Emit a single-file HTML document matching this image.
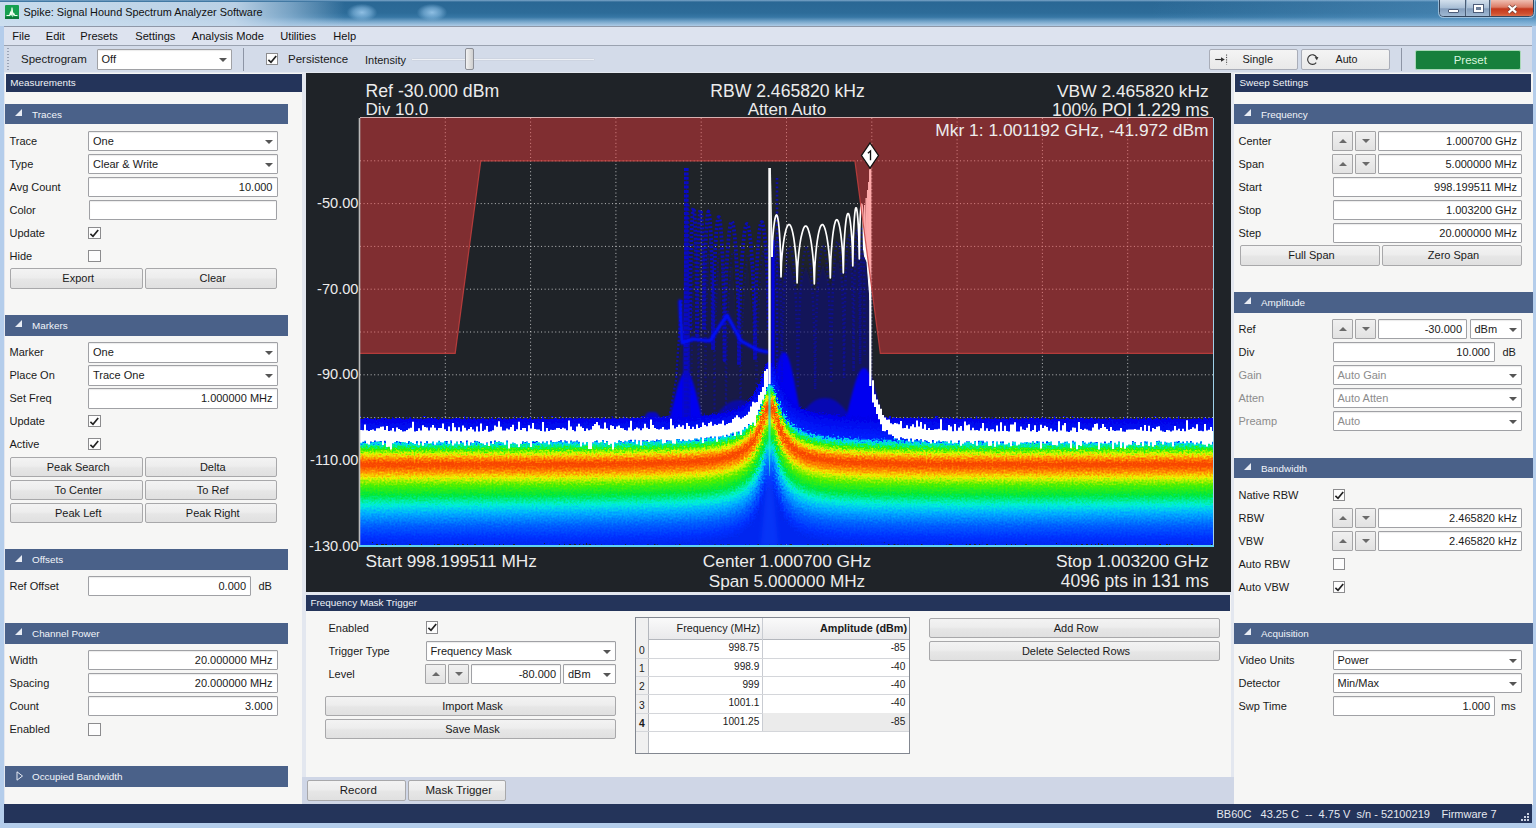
<!DOCTYPE html>
<html>
<head>
<meta charset="utf-8">
<style>
*{box-sizing:border-box;margin:0;padding:0}
html,body{width:1536px;height:828px;overflow:hidden;background:#b4cdeb;font-family:"Liberation Sans",sans-serif;font-size:11px;color:#1a1a1a}
.abs{position:absolute}
#titlebar{position:absolute;left:0;top:0;width:1536px;height:26px;background:linear-gradient(180deg,#7fa8cb 0,#2a6794 8%,#2d6c99 50%,#3777a5 66%,#7aa9cd 84%,#aecbe5 100%)}
#titleglow{position:absolute;left:0;top:2px;width:345px;height:24px;background:linear-gradient(90deg,rgba(206,224,240,.96) 0%,rgba(196,216,235,.93) 68%,rgba(170,200,226,.6) 84%,rgba(150,190,220,0) 100%)}
.tblob{position:absolute;top:4px;width:30px;height:17px;background:radial-gradient(ellipse at center,rgba(160,205,240,.85) 0%,rgba(150,200,238,.5) 40%,rgba(140,190,230,0) 72%)}
#title{position:absolute;left:23.5px;top:6px;font-size:10.9px;color:#111;white-space:nowrap}
#menubar{position:absolute;left:4.3px;top:26px;width:1528.2px;height:20px;background:#dde3ef;border-top:1px solid #8f98a8;border-bottom:1px solid #9aa2b0}
#menubar span{position:absolute;top:3px;font-size:11.1px;color:#111;white-space:nowrap}
#toolbar{position:absolute;left:4.3px;top:46px;width:1528.2px;height:27px;background:#d3dbe9}
.lbl{position:absolute;white-space:nowrap;font-size:11px;color:#1a1a1a;line-height:13px}
.dis{color:#8c8c8c}
.hdr1{position:absolute;background:#24345a;color:#f0f3f8;font-size:9.9px;line-height:18px;padding-left:4.5px;height:18px;white-space:nowrap}
.hdr2{position:absolute;background:#4a6189;color:#f2f5fa;font-size:9.9px;line-height:22.5px;overflow:hidden;height:20.5px;white-space:nowrap;padding-left:27px}
.hdr2 i{position:absolute;left:10px;top:5.3px;width:0;height:0;border-left:7px solid transparent;border-bottom:7px solid #e8ecf4}
.hdr2 i.c{left:11px;top:5px;border:0;width:7px;height:9px}
.inp{position:absolute;height:20px;background:#fff;border:1px solid #a0a1a5;border-radius:1px;font-size:11px;line-height:18.5px;white-space:nowrap;padding:0 4px;text-align:right;color:#1a1a1a;box-shadow:inset 0 1px 1px rgba(0,0,0,.08)}
.inp.dis{color:#8c8c8c}
.cmb{text-align:left}
.cmb:after{content:"";position:absolute;right:4px;top:8px;border-left:4px solid transparent;border-right:4px solid transparent;border-top:4px solid #555}
.btn{position:absolute;height:20px;border:1px solid #a8a8aa;border-radius:2px;background:linear-gradient(180deg,#f3f3f3 0%,#ededed 45%,#e6e6e6 55%,#e0e0e0 100%);font-size:11px;line-height:18.5px;text-align:center;color:#1a1a1a;white-space:nowrap;padding-left:4px}
.chk{position:absolute;width:12.5px;height:12.5px;background:#fdfdfd;border:1px solid #8c8c8e}
.chk svg{position:absolute;left:0;top:0}
.spn{position:absolute;width:21px;height:20.5px;border:1px solid #a4a4a6;border-radius:1px;background:linear-gradient(180deg,#f0f0f0,#e2e2e2)}
.spn:after{content:"";position:absolute;left:5.5px;top:7px;border-left:4px solid transparent;border-right:4px solid transparent}
.spn.u:after{border-bottom:4px solid #6a6a6a}
.spn.d:after{border-top:4px solid #6a6a6a}
#bgfill{position:absolute;left:4px;top:72px;width:1529px;height:733px;background:#e3e7ef}
#left{position:absolute;left:4.5px;top:73px;width:297.5px;height:731.5px;background:#f6f6f5}
#right{position:absolute;left:1234px;top:73px;width:298.5px;height:731.5px;background:#f6f6f5}
#chart{position:absolute;left:306px;top:73px;width:925px;height:518.5px;background:#1f2328}
#fmt{position:absolute;left:306px;top:594.5px;width:924.5px;height:182px;background:#f6f6f5}
#tabs{position:absolute;left:302px;top:776.5px;width:932px;height:28px;background:#cfd6e6}
#status{position:absolute;left:4.3px;top:804.3px;width:1528.2px;height:18.5px;background:#24345a}
.ct{position:absolute;color:#ececec;font-size:17.3px;line-height:20px;white-space:nowrap}
</style>
</head>

<body>
<div id="titlebar"><div id="titleglow"></div><div class="tblob" style="left:347px"></div><div class="tblob" style="left:417px"></div>
<svg class="abs" style="left:5px;top:5px" width="14" height="14" viewBox="0 0 14 14"><rect width="14" height="14" rx="1" fill="#16a050"/><rect y="11.5" width="14" height="2.5" fill="#0c7a3a"/><path d="M1.5 10.5 L4.5 10.5 L5.5 7.5 L6.3 10.5 L7 2.5 L7.9 10.5 L8.8 8.5 L9.7 10.5 L12.5 10.5" stroke="#f0fff0" stroke-width="1.1" fill="none"/></svg>
<div id="title">Spike: Signal Hound Spectrum Analyzer Software</div>
<div class="abs" style="left:1150px;top:0;width:386px;height:26px;background:linear-gradient(90deg,rgba(110,170,215,0),rgba(110,170,215,.42))"></div>
<div class="abs" style="left:1438.5px;top:-1px;width:95px;height:18px;border:1px solid #33465e;border-radius:0 0 4.5px 4.5px;overflow:hidden;background:#9db6cf;box-shadow:0 0 0 1px rgba(220,235,250,.55)"><div class="abs" style="left:0;top:0;width:26px;height:17px;background:linear-gradient(180deg,#d3e0ed,#a9bfd6 45%,#859fbd 52%,#a3bcd6);border-right:1px solid #4a5d75"></div><div class="abs" style="left:27px;top:0;width:23px;height:17px;background:linear-gradient(180deg,#d3e0ed,#a9bfd6 45%,#859fbd 52%,#a3bcd6);border-right:1px solid #4a5d75"></div><div class="abs" style="left:51px;top:0;width:43px;height:17px;background:linear-gradient(180deg,#efbfb2,#dc7c66 42%,#c4381c 52%,#cf5030 80%,#de7a55)"></div><div class="abs" style="left:8.5px;top:8.5px;width:10.5px;height:4.5px;background:#fff;border:1px solid #4c5c78;border-radius:1px"></div><div class="abs" style="left:34.5px;top:4.5px;width:9px;height:7.6px;border:2px solid #fff;background:#6d7f99;outline:1px solid #4c5c78"></div><svg class="abs" style="left:66.5px;top:3.6px" width="13" height="11" viewBox="0 0 13 11"><path d="M2.6 1.8 L10.2 8.6 M10.2 1.8 L2.6 8.6" stroke="#7a4338" stroke-width="3.6"/><path d="M2.6 1.8 L10.2 8.6 M10.2 1.8 L2.6 8.6" stroke="#fff" stroke-width="2.1"/></svg></div>
</div>
<div id="menubar">
<span style="left:8px">File</span>
<span style="left:41.5px">Edit</span>
<span style="left:76px">Presets</span>
<span style="left:131px">Settings</span>
<span style="left:187.5px">Analysis Mode</span>
<span style="left:276px">Utilities</span>
<span style="left:329px">Help</span>
</div>
<div id="toolbar"></div>
<div class="abs" style="left:7px;top:48px;width:2px;height:22px;background:repeating-linear-gradient(180deg,#9aa3b5 0 1px,transparent 1px 3px)"></div>
<div class="lbl " style="left:21px;top:53px;font-size:11.5px">Spectrogram</div>
<div class="inp cmb " style="left:96.5px;top:49px;width:135px;height:20.5px">Off</div>
<div class="abs" style="left:243px;top:48px;width:1px;height:23px;background:#8d95a5"></div>
<div class="chk" style="left:265.5px;top:52.5px"><svg width="11" height="11" viewBox="0 0 11 11"><path d="M1.4 5.9 L4 8.3 L9.2 2" stroke="#222" stroke-width="1.7" fill="none"/></svg></div>
<div class="lbl " style="left:288px;top:52.5px;font-size:11.5px">Persistence</div>
<div class="lbl " style="left:365px;top:53.5px;">Intensity</div>
<div class="abs" style="left:411px;top:57.5px;width:184px;height:3px;background:#eef1f6;border:1px solid #cdd4e1;border-radius:2px"></div>
<div class="abs" style="left:465px;top:48px;width:9px;height:22px;background:linear-gradient(90deg,#f2f2f2,#cfcfcf);border:1px solid #8b8e96;border-radius:2px"></div>
<div class="btn" style="left:1209px;top:48.6px;width:88.5px;height:21.3px;background:linear-gradient(180deg,#f4f4f4,#e9e9e9);border-color:#a9adb8;line-height:19.5px;"><span style="position:relative;left:2.5px">Single</span></div>
<svg class="abs" style="left:1214px;top:53px" width="16" height="13" viewBox="0 0 16 13"><path d="M1.2 6.5 H8" stroke="#333" stroke-width="1.1"/><path d="M7 4.2 L10.8 6.5 L7 8.8 Z" fill="#333"/><path d="M12.6 1.5 V11.5" stroke="#444" stroke-width="1" stroke-dasharray="1.2 1.2"/></svg>
<div class="btn" style="left:1300.5px;top:48.6px;width:89px;height:21.3px;background:linear-gradient(180deg,#f4f4f4,#e9e9e9);border-color:#a9adb8;line-height:19.5px;"><span style="position:relative;left:-.5px;font-size:10.7px">Auto</span></div>
<svg class="abs" style="left:1305px;top:52px" width="16" height="16" viewBox="0 0 16 16"><path d="M11.6 5.2 A4.8 4.8 0 1 0 11.2 10.6" stroke="#333" stroke-width="1.1" fill="none"/><path d="M9.6 5.2 L13.4 5 L11.9 8.3 Z" fill="#333"/></svg>
<div class="abs" style="left:1401px;top:48px;width:1px;height:23px;background:#8d95a5"></div>
<div class="abs" style="left:1414.5px;top:49.5px;width:106.5px;height:20px;background:#17803c;border:1px solid #a9d8b8;border-radius:2px;color:#d8f5dd;font-size:11.5px;line-height:18px;text-align:center;padding-left:5px">Preset</div>
<div id="bgfill"></div>
<div id="left"></div>
<div class="hdr1" style="left:5.8px;top:74px;width:296px">Measurements</div>
<div class="hdr2" style="left:5px;top:103.7px;width:283px"><i></i>Traces</div>
<div class="lbl " style="left:9.5px;top:134.9px;">Trace</div>
<div class="inp cmb " style="left:88px;top:130.6px;width:189.5px;height:20.5px">One</div>
<div class="lbl " style="left:9.5px;top:157.9px;">Type</div>
<div class="inp cmb " style="left:88px;top:153.6px;width:189.5px;height:20.5px">Clear &amp; Write</div>
<div class="lbl " style="left:9.5px;top:180.9px;">Avg Count</div>
<div class="inp " style="left:88px;top:176.6px;width:189.5px;height:20.5px">10.000</div>
<div class="lbl " style="left:9.5px;top:203.9px;">Color</div>
<div class="inp " style="left:88.7px;top:200.1px;width:188.3px;height:19.5px"></div>
<div class="lbl " style="left:9.5px;top:226.9px;">Update</div>
<div class="chk" style="left:88px;top:226.7px"><svg width="11" height="11" viewBox="0 0 11 11"><path d="M1.4 5.9 L4 8.3 L9.2 2" stroke="#222" stroke-width="1.7" fill="none"/></svg></div>
<div class="lbl " style="left:9.5px;top:249.9px;">Hide</div>
<div class="chk" style="left:88px;top:249.7px"></div>
<div class="btn" style="left:10px;top:268.1px;width:132.5px;height:20.5px;">Export</div>
<div class="btn" style="left:144.5px;top:268.1px;width:132.5px;height:20.5px;">Clear</div>
<div class="hdr2" style="left:5px;top:315.2px;width:283px"><i></i>Markers</div>
<div class="lbl " style="left:9.5px;top:346.4px;">Marker</div>
<div class="inp cmb " style="left:88px;top:342.09999999999997px;width:189.5px;height:20.5px">One</div>
<div class="lbl " style="left:9.5px;top:369.4px;">Place On</div>
<div class="inp cmb " style="left:88px;top:365.09999999999997px;width:189.5px;height:20.5px">Trace One</div>
<div class="lbl " style="left:9.5px;top:392.4px;">Set Freq</div>
<div class="inp " style="left:88px;top:388.09999999999997px;width:189.5px;height:20.5px">1.000000 MHz</div>
<div class="lbl " style="left:9.5px;top:415.4px;">Update</div>
<div class="chk" style="left:88px;top:414.7px"><svg width="11" height="11" viewBox="0 0 11 11"><path d="M1.4 5.9 L4 8.3 L9.2 2" stroke="#222" stroke-width="1.7" fill="none"/></svg></div>
<div class="lbl " style="left:9.5px;top:438.4px;">Active</div>
<div class="chk" style="left:88px;top:437.7px"><svg width="11" height="11" viewBox="0 0 11 11"><path d="M1.4 5.9 L4 8.3 L9.2 2" stroke="#222" stroke-width="1.7" fill="none"/></svg></div>
<div class="btn" style="left:10px;top:456.59999999999997px;width:132.5px;height:20.5px;">Peak Search</div>
<div class="btn" style="left:144.5px;top:456.59999999999997px;width:132.5px;height:20.5px;">Delta</div>
<div class="btn" style="left:10px;top:479.59999999999997px;width:132.5px;height:20.5px;">To Center</div>
<div class="btn" style="left:144.5px;top:479.59999999999997px;width:132.5px;height:20.5px;">To Ref</div>
<div class="btn" style="left:10px;top:502.59999999999997px;width:132.5px;height:20.5px;">Peak Left</div>
<div class="btn" style="left:144.5px;top:502.59999999999997px;width:132.5px;height:20.5px;">Peak Right</div>
<div class="hdr2" style="left:5px;top:549.3px;width:283px"><i></i>Offsets</div>
<div class="lbl " style="left:9.5px;top:580.1999999999999px;">Ref Offset</div>
<div class="inp " style="left:88px;top:575.9px;width:163px;height:20.5px">0.000</div>
<div class="lbl " style="left:258.5px;top:579.9px;">dB</div>
<div class="hdr2" style="left:5px;top:623px;width:283px"><i></i>Channel Power</div>
<div class="lbl " style="left:9.5px;top:654.1999999999999px;">Width</div>
<div class="inp " style="left:88px;top:649.9px;width:189.5px;height:20.5px">20.000000 MHz</div>
<div class="lbl " style="left:9.5px;top:677.1999999999999px;">Spacing</div>
<div class="inp " style="left:88px;top:672.9px;width:189.5px;height:20.5px">20.000000 MHz</div>
<div class="lbl " style="left:9.5px;top:700.1999999999999px;">Count</div>
<div class="inp " style="left:88px;top:695.9px;width:189.5px;height:20.5px">3.000</div>
<div class="lbl " style="left:9.5px;top:723.1999999999999px;">Enabled</div>
<div class="chk" style="left:88px;top:723.0px"></div>
<div class="hdr2" style="left:5px;top:766px;width:283px"><svg class="abs" style="left:11px;top:5px" width="8" height="10" viewBox="0 0 8 10"><path d="M1 .8 L6.5 5 L1 9.2 Z" fill="none" stroke="#e8ecf4" stroke-width="1"/></svg>Occupied Bandwidth</div>
<div id="right"></div>
<div class="hdr1" style="left:1235px;top:74px;width:295.7px">Sweep Settings</div>
<div class="hdr2" style="left:1234px;top:103.7px;width:299px"><i></i>Frequency</div>
<div class="lbl " style="left:1238.5px;top:134.9px;">Center</div>
<div class="spn u" style="left:1332.3px;top:130.6px"></div><div class="spn d" style="left:1355.2px;top:130.6px"></div>
<div class="inp " style="left:1378px;top:130.6px;width:144px;height:20.5px">1.000700 GHz</div>
<div class="lbl " style="left:1238.5px;top:157.9px;">Span</div>
<div class="spn u" style="left:1332.3px;top:153.6px"></div><div class="spn d" style="left:1355.2px;top:153.6px"></div>
<div class="inp " style="left:1378px;top:153.6px;width:144px;height:20.5px">5.000000 MHz</div>
<div class="lbl " style="left:1238.5px;top:180.9px;">Start</div>
<div class="inp " style="left:1332.5px;top:176.6px;width:189.5px;height:20.5px">998.199511 MHz</div>
<div class="lbl " style="left:1238.5px;top:203.9px;">Stop</div>
<div class="inp " style="left:1332.5px;top:199.6px;width:189.5px;height:20.5px">1.003200 GHz</div>
<div class="lbl " style="left:1238.5px;top:226.9px;">Step</div>
<div class="inp " style="left:1332.5px;top:222.6px;width:189.5px;height:20.5px">20.000000 MHz</div>
<div class="btn" style="left:1239.5px;top:245.1px;width:140px;height:20.5px;">Full Span</div>
<div class="btn" style="left:1381.5px;top:245.1px;width:140px;height:20.5px;">Zero Span</div>
<div class="hdr2" style="left:1234px;top:292px;width:299px"><i></i>Amplitude</div>
<div class="lbl " style="left:1238.5px;top:323.2px;">Ref</div>
<div class="spn u" style="left:1332.3px;top:318.9px"></div><div class="spn d" style="left:1355.2px;top:318.9px"></div>
<div class="inp " style="left:1378px;top:318.9px;width:89px;height:20.5px">-30.000</div>
<div class="inp cmb " style="left:1469.5px;top:318.9px;width:52.5px;height:20.5px">dBm</div>
<div class="lbl " style="left:1238.5px;top:346.2px;">Div</div>
<div class="inp " style="left:1332.5px;top:341.9px;width:162.5px;height:20.5px">10.000</div>
<div class="lbl " style="left:1502.5px;top:345.9px;">dB</div>
<div class="lbl dis" style="left:1238.5px;top:369.2px;">Gain</div>
<div class="inp cmb dis" style="left:1332.5px;top:364.9px;width:189.5px;height:20.5px">Auto Gain</div>
<div class="lbl dis" style="left:1238.5px;top:392.2px;">Atten</div>
<div class="inp cmb dis" style="left:1332.5px;top:387.9px;width:189.5px;height:20.5px">Auto Atten</div>
<div class="lbl dis" style="left:1238.5px;top:415.2px;">Preamp</div>
<div class="inp cmb dis" style="left:1332.5px;top:410.9px;width:189.5px;height:20.5px">Auto</div>
<div class="hdr2" style="left:1234px;top:457.7px;width:299px"><i></i>Bandwidth</div>
<div class="lbl " style="left:1238.5px;top:488.9px;">Native RBW</div>
<div class="chk" style="left:1332.5px;top:488.7px"><svg width="11" height="11" viewBox="0 0 11 11"><path d="M1.4 5.9 L4 8.3 L9.2 2" stroke="#222" stroke-width="1.7" fill="none"/></svg></div>
<div class="lbl " style="left:1238.5px;top:511.9px;">RBW</div>
<div class="spn u" style="left:1332.3px;top:507.59999999999997px"></div><div class="spn d" style="left:1355.2px;top:507.59999999999997px"></div>
<div class="inp " style="left:1378px;top:507.59999999999997px;width:144px;height:20.5px">2.465820 kHz</div>
<div class="lbl " style="left:1238.5px;top:534.8999999999999px;">VBW</div>
<div class="spn u" style="left:1332.3px;top:530.5999999999999px"></div><div class="spn d" style="left:1355.2px;top:530.5999999999999px"></div>
<div class="inp " style="left:1378px;top:530.5999999999999px;width:144px;height:20.5px">2.465820 kHz</div>
<div class="lbl " style="left:1238.5px;top:557.8999999999999px;">Auto RBW</div>
<div class="chk" style="left:1332.5px;top:557.6999999999999px"></div>
<div class="lbl " style="left:1238.5px;top:580.8999999999999px;">Auto VBW</div>
<div class="chk" style="left:1332.5px;top:580.6999999999999px"><svg width="11" height="11" viewBox="0 0 11 11"><path d="M1.4 5.9 L4 8.3 L9.2 2" stroke="#222" stroke-width="1.7" fill="none"/></svg></div>
<div class="hdr2" style="left:1234px;top:623px;width:299px"><i></i>Acquisition</div>
<div class="lbl " style="left:1238.5px;top:654.1999999999999px;">Video Units</div>
<div class="inp cmb " style="left:1332.5px;top:649.9px;width:189.5px;height:20.5px">Power</div>
<div class="lbl " style="left:1238.5px;top:677.1999999999999px;">Detector</div>
<div class="inp cmb " style="left:1332.5px;top:672.9px;width:189.5px;height:20.5px">Min/Max</div>
<div class="lbl " style="left:1238.5px;top:700.1999999999999px;">Swp Time</div>
<div class="inp " style="left:1332.5px;top:695.9px;width:162.5px;height:20.5px">1.000</div>
<div class="lbl " style="left:1501px;top:699.9px;">ms</div>
<div id="chart">
<svg class="abs" style="left:0;top:0" width="925" height="518" viewBox="306 73 925 518"><defs><linearGradient id="gA" x1="0" y1="0" x2="0" y2="1"><stop offset="0" stop-color="#0000e8"/><stop offset=".46" stop-color="#0020ff"/><stop offset=".53" stop-color="#00d8ff"/><stop offset=".6" stop-color="#00f080"/><stop offset=".67" stop-color="#30f000"/><stop offset=".77" stop-color="#e8f800"/><stop offset=".87" stop-color="#ff8c00"/><stop offset=".95" stop-color="#fb5204"/><stop offset="1" stop-color="#f64004"/></linearGradient><linearGradient id="gB" x1="0" y1="0" x2="0" y2="1"><stop offset="0" stop-color="#f64004"/><stop offset=".04" stop-color="#fb5204"/><stop offset=".10" stop-color="#ff8c00"/><stop offset=".17" stop-color="#f0f000"/><stop offset=".26" stop-color="#50f000"/><stop offset=".38" stop-color="#00e838"/><stop offset=".50" stop-color="#00f0d8"/><stop offset=".60" stop-color="#00b0ff"/><stop offset=".75" stop-color="#0060ff"/><stop offset=".9" stop-color="#0030ff"/><stop offset="1" stop-color="#0028f0"/></linearGradient><filter id="spk" x="0" y="0" width="1" height="1"><feTurbulence type="fractalNoise" baseFrequency="0.5" numOctaves="2" seed="3" result="n"/><feDisplacementMap in="SourceGraphic" in2="n" scale="11" xChannelSelector="R" yChannelSelector="G"/></filter><filter id="bl0"><feGaussianBlur stdDeviation="0.6"/></filter><filter id="bl1"><feGaussianBlur stdDeviation="1.2"/></filter><filter id="bl2"><feGaussianBlur stdDeviation="2.5"/></filter><filter id="bl3" x="-1" width="3"><feGaussianBlur stdDeviation="4"/></filter><clipPath id="cp"><rect x="360" y="118" width="853" height="428"/></clipPath></defs><path d="M445.3 118V546M360 160.8H1213M530.6 118V546M360 203.6H1213M615.9 118V546M360 246.4H1213M701.2 118V546M360 289.2H1213M786.5 118V546M360 332H1213M871.8 118V546M360 374.8H1213M957.1 118V546M360 417.6H1213M1042.4 118V546M360 460.4H1213M1127.7 118V546M360 503.2H1213" stroke="#e8e8e8" stroke-width="1" stroke-dasharray="1 2.55" fill="none" opacity=".78"/><g clip-path="url(#cp)"><path d="M360 418.7 L361.5 419.8 L363 420.1 L364.5 419.8 L366 419.5 L367.5 420.2 L369 420.2 L370.5 418.6 L372 419.2 L373.5 419.6 L375 419.6 L376.5 420 L378 419.7 L379.5 419.9 L381 419.9 L382.5 418.8 L384 419.7 L385.5 420 L387 419.9 L388.5 418.8 L390 418.7 L391.5 420 L393 419.8 L394.5 418.3 L396 420.1 L397.5 418.8 L399 419.8 L400.5 418.1 L402 419.2 L403.5 419.8 L405 419.5 L406.5 419.2 L408 418.6 L409.5 419.6 L411 418.3 L412.5 419.5 L414 419 L415.5 418.8 L417 418.5 L418.5 419.8 L420 419.4 L421.5 419.9 L423 419.6 L424.5 419.4 L426 418.6 L427.5 418.5 L429 419.8 L430.5 418.1 L432 419.9 L433.5 419.6 L435 418.4 L436.5 419.9 L438 420 L439.5 419.9 L441 420 L442.5 419.8 L444 418.8 L445.5 419.6 L447 420 L448.5 419 L450 419.7 L451.5 418.4 L453 420 L454.5 418.5 L456 419.7 L457.5 419.3 L459 419 L460.5 419.1 L462 419.8 L463.5 419 L465 418.7 L466.5 419.8 L468 419.9 L469.5 418.7 L471 418.7 L472.5 419.8 L474 419.7 L475.5 419.4 L477 419.8 L478.5 418.4 L480 419.4 L481.5 419.2 L483 419.6 L484.5 419.2 L486 419.8 L487.5 419.5 L489 419.7 L490.5 418.8 L492 418.6 L493.5 419.4 L495 419.5 L496.5 419.4 L498 420 L499.5 419.9 L501 419.4 L502.5 419.9 L504 417.9 L505.5 419.2 L507 419.6 L508.5 419.5 L510 419.2 L511.5 419.6 L513 419.6 L514.5 418.6 L516 419.5 L517.5 419.4 L519 418.6 L520.5 419.8 L522 418.4 L523.5 419.5 L525 419.6 L526.5 419.6 L528 418.9 L529.5 419.4 L531 418.8 L532.5 419.7 L534 419.8 L535.5 419.5 L537 419.3 L538.5 418.3 L540 419.5 L541.5 419.1 L543 419.3 L544.5 419.7 L546 419.8 L547.5 419.1 L549 419.4 L550.5 419.5 L552 418.9 L553.5 419.5 L555 419.2 L556.5 419.5 L558 419.3 L559.5 419.6 L561 418.8 L562.5 418.1 L564 419.7 L565.5 418.5 L567 418 L568.5 419.4 L570 419.1 L571.5 419.3 L573 419.2 L574.5 418.7 L576 418.6 L577.5 419.2 L579 419.4 L580.5 418.9 L582 419.4 L583.5 418.3 L585 419.6 L586.5 418 L588 419.4 L589.5 419 L591 418.6 L592.5 418 L594 418.2 L595.5 418.9 L597 418.5 L598.5 418.6 L600 418.7 L601.5 419.1 L603 417.8 L604.5 418.1 L606 419 L607.5 418.4 L609 418.8 L610.5 418.9 L612 418.4 L613.5 418.7 L615 418.6 L616.5 419.2 L618 419.3 L619.5 418.5 L621 418.5 L622.5 419.2 L624 418.4 L625.5 418.8 L627 418 L628.5 418.6 L630 418.8 L631.5 418.8 L633 418.9 L634.5 418 L636 419 L637.5 417.4 L639 417.8 L640.5 418.4 L642 418.8 L643.5 418 L645 418.7 L646.5 418.3 L648 417.9 L649.5 418.2 L651 417 L652.5 417 L654 417.1 L655.5 418.2 L657 417.9 L658.5 418.6 L660 417.2 L661.5 417.7 L663 417.3 L664.5 417.3 L666 418.2 L667.5 417.8 L669 418.2 L670.5 417.6 L672 417.9 L673.5 418.1 L675 417.2 L676.5 417.9 L678 417.6 L679.5 417.8 L681 417.6 L682.5 417.4 L684 417.3 L685.5 417.8 L687 417.6 L688.5 417.1 L690 417.4 L691.5 415.9 L693 417.2 L694.5 417.1 L696 416.3 L697.5 417.1 L699 416.4 L700.5 416.3 L702 416.8 L703.5 416 L705 416.5 L706.5 416 L708 415.4 L709.5 416 L711 415.6 L712.5 414.8 L714 414.6 L715.5 415.1 L717 414.8 L718.5 414.8 L720 414.7 L721.5 412.8 L723 413.1 L724.5 413.9 L726 413 L727.5 412.3 L729 411.8 L730.5 412 L732 412 L733.5 410.4 L735 411 L736.5 410.4 L738 409.8 L739.5 408.9 L741 408.5 L742.5 406.9 L744 406.4 L745.5 404.9 L747 404.6 L748.5 402.8 L750 400.8 L751.5 399.6 L753 396.8 L754.5 396 L756 392.6 L757.5 391.1 L759 387.6 L760.5 384.3 L762 380.2 L763.5 375.8 L765 371.8 L766.5 367.8 L768 368.7 L769.5 368.4 L771 368.6 L772.5 368.3 L774 371.3 L775.5 376 L777 378.6 L778.5 383.8 L780 387.6 L781.5 389.3 L783 392.3 L784.5 396.1 L786 397.7 L787.5 400.2 L789 401.5 L790.5 402.4 L792 403.4 L793.5 405 L795 406.4 L796.5 407.7 L798 407.4 L799.5 408.5 L801 409.6 L802.5 409.7 L804 409.5 L805.5 411.7 L807 410.6 L808.5 412 L810 412.7 L811.5 413.2 L813 412.2 L814.5 413.7 L816 413.4 L817.5 414.4 L819 414.7 L820.5 413.8 L822 414.1 L823.5 414.1 L825 415 L826.5 414.7 L828 414.8 L829.5 415.9 L831 415.5 L832.5 415.9 L834 414 L835.5 416.1 L837 416.1 L838.5 416.7 L840 416.5 L841.5 416.9 L843 416.4 L844.5 416.3 L846 416.9 L847.5 417.5 L849 416.1 L850.5 416.6 L852 417 L853.5 417.6 L855 417.6 L856.5 417.7 L858 417.4 L859.5 416.9 L861 417.8 L862.5 416.9 L864 417.9 L865.5 417 L867 418.2 L868.5 418.3 L870 416.8 L871.5 417.5 L873 417.2 L874.5 418 L876 417.6 L877.5 418.1 L879 418.3 L880.5 418 L882 417.2 L883.5 418.1 L885 416.4 L886.5 417 L888 418.7 L889.5 416.8 L891 418.8 L892.5 418.9 L894 416.9 L895.5 418.9 L897 418.8 L898.5 418.3 L900 418.5 L901.5 418.2 L903 418.7 L904.5 418.9 L906 418.6 L907.5 418.5 L909 419.1 L910.5 418.8 L912 418.7 L913.5 417.3 L915 418.8 L916.5 417.9 L918 419.2 L919.5 417.7 L921 419.3 L922.5 418.3 L924 418.1 L925.5 418.3 L927 419.4 L928.5 418.9 L930 418.6 L931.5 419.4 L933 419.2 L934.5 418.6 L936 416.7 L937.5 418.1 L939 419.5 L940.5 419.4 L942 419.2 L943.5 419.4 L945 419.4 L946.5 418.9 L948 418.8 L949.5 419.3 L951 418.2 L952.5 418.7 L954 419.6 L955.5 419.2 L957 418.3 L958.5 418.7 L960 419.6 L961.5 419 L963 418.4 L964.5 419.3 L966 419.6 L967.5 418.2 L969 418.5 L970.5 419.1 L972 419.1 L973.5 419.4 L975 418.8 L976.5 418.6 L978 419 L979.5 418.4 L981 419.7 L982.5 419 L984 419.5 L985.5 419.2 L987 419.4 L988.5 417.3 L990 419.2 L991.5 418.6 L993 419.6 L994.5 419.2 L996 418.8 L997.5 419.5 L999 418.5 L1000.5 419.8 L1002 419.2 L1003.5 419.5 L1005 419.2 L1006.5 419.1 L1008 419.8 L1009.5 419.4 L1011 419.5 L1012.5 419.2 L1014 419.4 L1015.5 419.6 L1017 419.6 L1018.5 419.6 L1020 419.5 L1021.5 419.2 L1023 418 L1024.5 419.2 L1026 419.5 L1027.5 419.6 L1029 419.2 L1030.5 419.6 L1032 419 L1033.5 417.4 L1035 419.4 L1036.5 419.1 L1038 419.9 L1039.5 419.3 L1041 419.4 L1042.5 419.4 L1044 418.3 L1045.5 417.4 L1047 419.7 L1048.5 419.7 L1050 420 L1051.5 419.7 L1053 418.8 L1054.5 419.2 L1056 419.4 L1057.5 419 L1059 419.9 L1060.5 419.3 L1062 419.9 L1063.5 419.8 L1065 419.5 L1066.5 419.9 L1068 419.5 L1069.5 419.9 L1071 419 L1072.5 419.3 L1074 419 L1075.5 419 L1077 419.7 L1078.5 419.2 L1080 419.1 L1081.5 419.2 L1083 419.9 L1084.5 419.2 L1086 419.7 L1087.5 419.5 L1089 419.6 L1090.5 419.9 L1092 419.8 L1093.5 419.9 L1095 419.5 L1096.5 419.4 L1098 419.2 L1099.5 419.6 L1101 418.8 L1102.5 419.4 L1104 419.1 L1105.5 419.9 L1107 418.9 L1108.5 419.9 L1110 418.7 L1111.5 418.4 L1113 419.7 L1114.5 419.8 L1116 419.3 L1117.5 419.7 L1119 418.9 L1120.5 419.8 L1122 418.9 L1123.5 420 L1125 419.3 L1126.5 418.5 L1128 419 L1129.5 418.5 L1131 418.7 L1132.5 419.9 L1134 419.2 L1135.5 419 L1137 419.2 L1138.5 419.8 L1140 419 L1141.5 418.6 L1143 419.5 L1144.5 419.4 L1146 419.9 L1147.5 418.8 L1149 419 L1150.5 419.7 L1152 419.9 L1153.5 420 L1155 419.7 L1156.5 419.9 L1158 419.3 L1159.5 419 L1161 420 L1162.5 419.1 L1164 418.9 L1165.5 420.1 L1167 419.2 L1168.5 419.9 L1170 419.7 L1171.5 420.1 L1173 419.3 L1174.5 418.9 L1176 418.5 L1177.5 419.9 L1179 420 L1180.5 420 L1182 419.8 L1183.5 420 L1185 419.5 L1186.5 419.4 L1188 420.1 L1189.5 419.4 L1191 419.2 L1192.5 419.6 L1194 419.7 L1195.5 418.4 L1197 419.2 L1198.5 419.9 L1200 419.2 L1201.5 419.6 L1203 420 L1204.5 418.9 L1206 417.9 L1207.5 419.8 L1209 419.4 L1210.5 419.6 L1212 419.4 L1213 470 L360 470 Z" fill="#0000f0"/><path d="M772 236 L776 250 L781 284 L789 262 L797 292 L806 266 L814 292 L823 264 L830 287 L837.5 258 L843 282 L849 252 L853 275 L856 246 L859.5 268 L861.5 240 L864 258 L869 240 L871 300 L872 428 L772 428 Z" fill="#0a0a78" opacity=".62" filter="url(#bl1)"/><path d="M690 250 L697 330 L708 240 L713 340 L718 246 L724.5 350 L731.5 250 L739 355 L747 252 L755 350 L763 250 L768 300 L768 428 L672 428 L682 330 Z" fill="#0a0a78" opacity=".38" filter="url(#bl1)"/><path d="M663 440 C673.4 410 678 372 686 372 C694 372 698.6 410 709 440 Z" fill="#0000f0" opacity="1.0" filter="url(#bl1)"/><path d="M839 440 C850.2 410 855.2 368 864 368 C872.8 368 877.8 410 889 440 Z" fill="#0000f0" opacity="1.0" filter="url(#bl1)"/><path d="M760 440 C770.8 410 775.6 352 784 352 C792.4 352 797.2 410 808 440 Z" fill="#0000f0" opacity="1.0" filter="url(#bl1)"/><path d="M638 440 C644.3 410 647.1 412 652 412 C656.9 412 659.7 410 666 440 Z" fill="#0000f0" opacity="0.8" filter="url(#bl1)"/><path d="M700 440 C718 410 726 400 740 400 C754 400 762 410 780 440 Z" fill="#0000f0" opacity="0.55" filter="url(#bl1)"/><path d="M785 440 C803 410 811 398 825 398 C839 398 847 410 865 440 Z" fill="#0000f0" opacity="0.6" filter="url(#bl1)"/><path d="M686.3 168 V430" stroke="#0a0ac4" stroke-width="4.6" stroke-dasharray="3 1.4" fill="none"/><path d="M686.3 172 L689 260 L691 420 L682 420 L684 260 Z" fill="#0a0ac4" opacity=".55"/><path d="M688.5 205 V420" stroke="#0a0ac4" stroke-width="2.2" stroke-dasharray="1.6 2.6" fill="none" opacity=".75"/><path d="M681.5 300 L676 380 L668 425" stroke="#0a0ac4" stroke-width="2.4" stroke-dasharray="2 2" fill="none" opacity=".8"/><path d="M690 330 L690.5 272.6 L691 249.9 L691.5 233.9 L692 222.3 L692.5 214.3 L693 209.6 L693.5 208 L694 209.6 L694.5 214.4 L695 222.5 L695.5 234.5 L696 251.1 L696.5 274.9 L697 335 L697 335 L697.5 275.8 L698 252.4 L698.5 236.1 L699 224.3 L699.5 216.3 L700 211.5 L700.5 210 L701 211.5 L701.5 216.2 L702 224.1 L702.5 235.5 L703 251.2 L703.5 273.6 L704 330 L704 330 L704.5 281.3 L705 261.7 L705.5 247.3 L706 236 L706.5 227.1 L707 220.3 L707.5 215.5 L708 212.6 L708.5 211.6 L709 212.6 L709.5 215.6 L710 220.7 L710.5 228.2 L711 238.2 L711.5 251.2 L712 268.1 L712.5 291.7 L713 350 L713 350 L713.5 301.2 L714 281.3 L714.5 266.5 L715 254.6 L715.5 244.8 L716 236.7 L716.5 230.1 L717 224.9 L717.5 221 L718 218.4 L718.5 217.2 L719 217.2 L719.5 218.5 L720 221.1 L720.5 225.1 L721 230.5 L721.5 237.4 L722 246 L722.5 256.4 L723 269.3 L723.5 285.3 L724 307 L724.5 360 L724.5 360 L725 314.6 L725.5 296 L726 282 L726.5 270.5 L727 260.8 L727.5 252.5 L728 245.4 L728.5 239.3 L729 234.1 L729.5 229.9 L730 226.6 L730.5 224.1 L731 222.4 L731.5 221.6 L732 221.6 L732.5 222.4 L733 224.1 L733.5 226.6 L734 230 L734.5 234.3 L735 239.5 L735.5 245.8 L736 253.1 L736.5 261.7 L737 271.8 L737.5 283.7 L738 298.3 L738.5 317.7 L739 365 L739 365 L739.5 320.7 L740 302.5 L740.5 288.8 L741 277.5 L741.5 267.9 L742 259.7 L742.5 252.5 L743 246.2 L743.5 240.9 L744 236.3 L744.5 232.5 L745 229.4 L745.5 227 L746 225.3 L746.5 224.3 L747 224 L747.5 224.3 L748 225.3 L748.5 227 L749 229.4 L749.5 232.4 L750 236.1 L750.5 240.6 L751 245.8 L751.5 251.9 L752 258.9 L752.5 266.9 L753 276.1 L753.5 286.9 L754 300.1 L754.5 317.5 L755 360 L755 360 L755.5 312.2 L756 292.6 L756.5 277.9 L757 266.1 L757.5 256.3 L758 248 L758.5 241.2 L759 235.5 L759.5 230.9 L760 227.3 L760.5 224.7 L761 223 L761.5 222.1 L762 222.1 L762.5 222.9 L763 224.6 L763.5 227 L764 230.2 L764.5 234.2 L765 239 L765.5 244.7 L766 251.4 L766.5 259.1 L767 268.2 L767.5 279.3 L768 293.9 L768.5 330" stroke="#0a0ac4" stroke-width="3.8" stroke-dasharray="2 2" fill="none" stroke-linejoin="round" opacity=".9"/><path d="M691.5 395 L692 321.1 L692.5 291.8 L693 271.3 L693.5 256.3 L694 246.1 L694.5 240 L695 238 L695.5 240 L696 246.1 L696.5 256.6 L697 271.9 L697.5 293 L698 323.4 L698.5 400 L698.5 400 L699 324.3 L699.5 294.4 L700 273.4 L700.5 258.4 L701 248 L701.5 242 L702 240 L702.5 242 L703 248 L703.5 258.1 L704 272.8 L704.5 293.1 L705 322.1 L705.5 395 L705.5 395 L706 331.7 L706.5 306.2 L707 287.5 L707.5 272.9 L708 261.4 L708.5 252.7 L709 246.5 L709.5 242.8 L710 241.6 L710.5 242.9 L711 246.7 L711.5 253.2 L712 262.5 L712.5 275.1 L713 291.4 L713.5 312.7 L714 342.1 L714.5 415 L714.5 415 L715 353.3 L715.5 328.2 L716 309.4 L716.5 294.4 L717 282 L717.5 271.8 L718 263.4 L718.5 256.9 L719 252 L719.5 248.8 L720 247.2 L720.5 247.2 L721 248.8 L721.5 252.1 L722 257.1 L722.5 263.8 L723 272.5 L723.5 283.1 L724 296.2 L724.5 312.2 L725 332.1 L725.5 359 L726 425 L726 425 L726.5 368.1 L727 344.7 L727.5 327.2 L728 312.8 L728.5 300.7 L729 290.3 L729.5 281.3 L730 273.7 L730.5 267.3 L731 262 L731.5 257.8 L732 254.7 L732.5 252.7 L733 251.6 L733.5 251.6 L734 252.7 L734.5 254.7 L735 257.9 L735.5 262.1 L736 267.5 L736.5 274 L737 281.8 L737.5 290.9 L738 301.6 L738.5 314.1 L739 328.9 L739.5 347.1 L740 371.2 L740.5 430 L740.5 430 L741 374.8 L741.5 352.1 L742 335 L742.5 320.9 L743 308.9 L743.5 298.6 L744 289.6 L744.5 281.8 L745 275.1 L745.5 269.4 L746 264.6 L746.5 260.8 L747 257.8 L747.5 255.7 L748 254.4 L748.5 254 L749 254.4 L749.5 255.7 L750 257.8 L750.5 260.7 L751 264.5 L751.5 269.2 L752 274.8 L752.5 281.4 L753 289 L753.5 297.8 L754 307.8 L754.5 319.5 L755 333.1 L755.5 349.6 L756 371.6 L756.5 425 L756.5 425 L757 365.3 L757.5 340.8 L758 322.4 L758.5 307.6 L759 295.3 L759.5 285 L760 276.3 L760.5 269.1 L761 263.3 L761.5 258.8 L762 255.4 L762.5 253.2 L763 252.1 L763.5 252.1 L764 253.2 L764.5 255.3 L765 258.4 L765.5 262.6 L766 267.9 L766.5 274.2 L767 281.7 L767.5 290.4 L768 300.7 L768.5 312.8 L769 327.5 L769.5 347 L770 395" stroke="#0a0ac4" stroke-width="2.2" stroke-dasharray="1.4 3" fill="none" opacity=".45"/><path d="M772.8 362 L773.3 310.6 L773.8 289.8 L774.3 274.6 L774.8 262.7 L775.3 253.3 L775.8 246.1 L776.3 241.1 L776.8 238 L777.3 237 L777.8 238 L778.3 241.2 L778.8 246.6 L779.3 254.4 L779.8 264.9 L780.3 278.5 L780.8 296.3 L781.3 320.9 L781.8 382 L781.8 382 L782.3 339.7 L782.8 322.4 L783.3 309.3 L783.8 298.5 L784.3 289.3 L784.8 281.4 L785.3 274.4 L785.8 268.4 L786.3 263.2 L786.8 258.7 L787.3 255 L787.8 251.9 L788.3 249.6 L788.8 247.9 L789.3 246.9 L789.8 246.6 L790.4 246.9 L790.9 247.9 L791.4 249.6 L791.9 252 L792.4 255.1 L792.9 258.9 L793.4 263.5 L793.9 268.9 L794.4 275.1 L794.9 282.3 L795.4 290.6 L795.9 300.2 L796.4 311.6 L796.9 325.3 L797.4 343.6 L797.9 388 L797.9 388 L798.4 345.5 L798.9 328 L799.4 314.8 L799.9 303.9 L800.4 294.6 L800.9 286.5 L801.4 279.4 L801.9 273.1 L802.5 267.7 L803 263 L803.5 258.9 L804 255.6 L804.5 252.8 L805 250.7 L805.5 249.2 L806 248.3 L806.5 248 L807 248.3 L807.5 249.2 L808 250.7 L808.5 252.8 L809 255.6 L809.5 259 L810 263 L810.5 267.8 L811.1 273.2 L811.6 279.5 L812.1 286.6 L812.6 294.8 L813.1 304.2 L813.6 315.2 L814.1 328.5 L814.6 346.1 L815.1 389 L815.1 389 L815.6 344.3 L816.1 325.9 L816.6 312 L817.1 300.6 L817.6 290.9 L818.1 282.6 L818.6 275.3 L819.1 269 L819.6 263.6 L820.1 259 L820.6 255.1 L821.1 252 L821.6 249.6 L822.1 247.9 L822.6 246.9 L823.1 246.6 L823.6 246.9 L824.1 247.9 L824.6 249.6 L825.1 252 L825.6 255 L826.1 258.8 L826.6 263.3 L827.1 268.5 L827.6 274.6 L828.1 281.6 L828.6 289.6 L829.1 298.9 L829.6 309.8 L830.1 323 L830.6 340.4 L831.1 383 L831.1 383 L831.6 333.8 L832.1 313.7 L832.6 298.6 L833.1 286.4 L833.6 276.3 L834.1 267.7 L834.6 260.6 L835.1 254.7 L835.6 249.9 L836.1 246.3 L836.6 243.7 L837.1 242.2 L837.6 241.7 L838.1 242.2 L838.6 243.7 L839.1 246.3 L839.6 249.8 L840.1 254.5 L840.6 260.3 L841.1 267.2 L841.6 275.5 L842.1 285.3 L842.6 297.1 L843.1 311.5 L843.6 330.8 L844.1 378 L844.1 378 L844.6 319.9 L845.1 296.4 L845.6 279.3 L846.1 265.9 L846.6 255.4 L847.1 247.3 L847.6 241.4 L848.1 237.6 L848.6 235.6 L849.1 235.6 L849.6 237.5 L850.1 241.3 L850.6 247.1 L851.1 255 L851.6 265 L852.1 277.8 L852.6 294 L853.1 316.2 L853.6 371 L853.6 371 L854.1 301.6 L854.6 274.3 L855.1 255.6 L855.6 242.5 L856.1 234.2 L856.6 230.1 L857.1 230.1 L857.6 234.1 L858.1 242.3 L858.6 254.9 L859.1 272.7 L859.6 298.5 L860.1 364 L860.1 364 L860.6 282.9 L861.1 253 L861.6 235.4 L862.1 227 L862.6 227 L863.1 235.2 L863.6 252 L864.1 280 L864.6 355" stroke="#0a0ac4" stroke-width="2.6" stroke-dasharray="1.6 2.6" fill="none" opacity=".5"/><path d="M777 178 V420" stroke="#0a0ac4" stroke-width="2.6" stroke-dasharray="1.8 2.4" fill="none" opacity=".85"/><path d="M773 240 V420" stroke="#0000f0" stroke-width="3.2" fill="none" opacity=".9"/><path d="M680 301 L682 343 L693 339 L710 341 L727 315 L741 341 L758 350 L767 352" stroke="#0008ff" stroke-width="3.6" fill="none" stroke-linejoin="round" stroke-linecap="round" filter="url(#bl1)"/><g filter="url(#spk)"><rect x="348" y="419" width="192" height="45.6" fill="url(#gA)"/><rect x="348" y="463.5" width="192" height="82.5" fill="url(#gB)"/><rect x="1010" y="419" width="215" height="45.6" fill="url(#gA)"/><rect x="1010" y="463.5" width="215" height="82.5" fill="url(#gB)"/><rect x="540" y="419" width="2.2" height="45.6" fill="url(#gA)"/><rect x="540" y="463.5" width="2.2" height="82.5" fill="url(#gB)"/><rect x="542" y="419" width="2.2" height="45.6" fill="url(#gA)"/><rect x="542" y="463.5" width="2.2" height="82.5" fill="url(#gB)"/><rect x="544" y="419" width="2.2" height="45.6" fill="url(#gA)"/><rect x="544" y="463.5" width="2.2" height="82.5" fill="url(#gB)"/><rect x="546" y="419" width="2.2" height="45.6" fill="url(#gA)"/><rect x="546" y="463.5" width="2.2" height="82.5" fill="url(#gB)"/><rect x="548" y="419" width="2.2" height="45.6" fill="url(#gA)"/><rect x="548" y="463.5" width="2.2" height="82.5" fill="url(#gB)"/><rect x="550" y="419" width="2.2" height="45.6" fill="url(#gA)"/><rect x="550" y="463.5" width="2.2" height="82.5" fill="url(#gB)"/><rect x="552" y="418.9" width="2.2" height="45.6" fill="url(#gA)"/><rect x="552" y="463.4" width="2.2" height="82.5" fill="url(#gB)"/><rect x="554" y="418.9" width="2.2" height="45.6" fill="url(#gA)"/><rect x="554" y="463.4" width="2.2" height="82.5" fill="url(#gB)"/><rect x="556" y="418.9" width="2.2" height="45.6" fill="url(#gA)"/><rect x="556" y="463.4" width="2.2" height="82.5" fill="url(#gB)"/><rect x="558" y="418.9" width="2.2" height="45.6" fill="url(#gA)"/><rect x="558" y="463.4" width="2.2" height="82.5" fill="url(#gB)"/><rect x="560" y="418.9" width="2.2" height="45.6" fill="url(#gA)"/><rect x="560" y="463.4" width="2.2" height="82.5" fill="url(#gB)"/><rect x="562" y="418.9" width="2.2" height="45.6" fill="url(#gA)"/><rect x="562" y="463.4" width="2.2" height="82.5" fill="url(#gB)"/><rect x="564" y="418.9" width="2.2" height="45.6" fill="url(#gA)"/><rect x="564" y="463.4" width="2.2" height="82.5" fill="url(#gB)"/><rect x="566" y="418.9" width="2.2" height="45.6" fill="url(#gA)"/><rect x="566" y="463.4" width="2.2" height="82.5" fill="url(#gB)"/><rect x="568" y="418.9" width="2.2" height="45.6" fill="url(#gA)"/><rect x="568" y="463.4" width="2.2" height="82.5" fill="url(#gB)"/><rect x="570" y="418.8" width="2.2" height="45.6" fill="url(#gA)"/><rect x="570" y="463.3" width="2.2" height="82.5" fill="url(#gB)"/><rect x="572" y="418.8" width="2.2" height="45.6" fill="url(#gA)"/><rect x="572" y="463.3" width="2.2" height="82.5" fill="url(#gB)"/><rect x="574" y="418.8" width="2.2" height="45.6" fill="url(#gA)"/><rect x="574" y="463.3" width="2.2" height="82.5" fill="url(#gB)"/><rect x="576" y="418.8" width="2.2" height="45.6" fill="url(#gA)"/><rect x="576" y="463.3" width="2.2" height="82.5" fill="url(#gB)"/><rect x="578" y="418.8" width="2.2" height="45.6" fill="url(#gA)"/><rect x="578" y="463.3" width="2.2" height="82.5" fill="url(#gB)"/><rect x="580" y="418.8" width="2.2" height="45.6" fill="url(#gA)"/><rect x="580" y="463.3" width="2.2" height="82.5" fill="url(#gB)"/><rect x="582" y="418.8" width="2.2" height="45.6" fill="url(#gA)"/><rect x="582" y="463.3" width="2.2" height="82.5" fill="url(#gB)"/><rect x="584" y="418.8" width="2.2" height="45.6" fill="url(#gA)"/><rect x="584" y="463.3" width="2.2" height="82.5" fill="url(#gB)"/><rect x="586" y="418.7" width="2.2" height="45.6" fill="url(#gA)"/><rect x="586" y="463.2" width="2.2" height="82.5" fill="url(#gB)"/><rect x="588" y="418.7" width="2.2" height="45.6" fill="url(#gA)"/><rect x="588" y="463.2" width="2.2" height="82.5" fill="url(#gB)"/><rect x="590" y="418.7" width="2.2" height="45.6" fill="url(#gA)"/><rect x="590" y="463.2" width="2.2" height="82.5" fill="url(#gB)"/><rect x="592" y="418.7" width="2.2" height="45.6" fill="url(#gA)"/><rect x="592" y="463.2" width="2.2" height="82.5" fill="url(#gB)"/><rect x="592" y="545.2" width="2.2" height="1.3" fill="#0028f0"/><rect x="594" y="418.7" width="2.2" height="45.6" fill="url(#gA)"/><rect x="594" y="463.2" width="2.2" height="82.5" fill="url(#gB)"/><rect x="594" y="545.2" width="2.2" height="1.3" fill="#0028f0"/><rect x="596" y="418.7" width="2.2" height="45.6" fill="url(#gA)"/><rect x="596" y="463.2" width="2.2" height="82.5" fill="url(#gB)"/><rect x="596" y="545.2" width="2.2" height="1.3" fill="#0028f0"/><rect x="598" y="418.6" width="2.2" height="45.6" fill="url(#gA)"/><rect x="598" y="463.1" width="2.2" height="82.5" fill="url(#gB)"/><rect x="598" y="545.1" width="2.2" height="1.4" fill="#0028f0"/><rect x="600" y="418.6" width="2.2" height="45.6" fill="url(#gA)"/><rect x="600" y="463.1" width="2.2" height="82.5" fill="url(#gB)"/><rect x="600" y="545.1" width="2.2" height="1.4" fill="#0028f0"/><rect x="602" y="418.6" width="2.2" height="45.6" fill="url(#gA)"/><rect x="602" y="463.1" width="2.2" height="82.5" fill="url(#gB)"/><rect x="602" y="545.1" width="2.2" height="1.4" fill="#0028f0"/><rect x="604" y="418.6" width="2.2" height="45.6" fill="url(#gA)"/><rect x="604" y="463.1" width="2.2" height="82.5" fill="url(#gB)"/><rect x="604" y="545.1" width="2.2" height="1.4" fill="#0028f0"/><rect x="606" y="418.6" width="2.2" height="45.6" fill="url(#gA)"/><rect x="606" y="463.1" width="2.2" height="82.5" fill="url(#gB)"/><rect x="606" y="545.1" width="2.2" height="1.4" fill="#0028f0"/><rect x="608" y="418.5" width="2.2" height="45.6" fill="url(#gA)"/><rect x="608" y="463" width="2.2" height="82.5" fill="url(#gB)"/><rect x="608" y="545" width="2.2" height="1.5" fill="#0028f0"/><rect x="610" y="418.5" width="2.2" height="45.6" fill="url(#gA)"/><rect x="610" y="463" width="2.2" height="82.5" fill="url(#gB)"/><rect x="610" y="545" width="2.2" height="1.5" fill="#0028f0"/><rect x="612" y="418.5" width="2.2" height="45.6" fill="url(#gA)"/><rect x="612" y="463" width="2.2" height="82.5" fill="url(#gB)"/><rect x="612" y="545" width="2.2" height="1.5" fill="#0028f0"/><rect x="614" y="418.5" width="2.2" height="45.6" fill="url(#gA)"/><rect x="614" y="463" width="2.2" height="82.5" fill="url(#gB)"/><rect x="614" y="545" width="2.2" height="1.5" fill="#0028f0"/><rect x="616" y="418.5" width="2.2" height="45.6" fill="url(#gA)"/><rect x="616" y="463" width="2.2" height="82.5" fill="url(#gB)"/><rect x="616" y="545" width="2.2" height="1.5" fill="#0028f0"/><rect x="618" y="418.4" width="2.2" height="45.6" fill="url(#gA)"/><rect x="618" y="462.9" width="2.2" height="82.5" fill="url(#gB)"/><rect x="618" y="544.9" width="2.2" height="1.6" fill="#0028f0"/><rect x="620" y="418.4" width="2.2" height="45.6" fill="url(#gA)"/><rect x="620" y="462.9" width="2.2" height="82.5" fill="url(#gB)"/><rect x="620" y="544.9" width="2.2" height="1.6" fill="#0028f0"/><rect x="622" y="418.4" width="2.2" height="45.6" fill="url(#gA)"/><rect x="622" y="462.9" width="2.2" height="82.5" fill="url(#gB)"/><rect x="622" y="544.9" width="2.2" height="1.6" fill="#0028f0"/><rect x="624" y="418.4" width="2.2" height="45.6" fill="url(#gA)"/><rect x="624" y="462.9" width="2.2" height="82.5" fill="url(#gB)"/><rect x="624" y="544.9" width="2.2" height="1.6" fill="#0028f0"/><rect x="626" y="418.3" width="2.2" height="45.6" fill="url(#gA)"/><rect x="626" y="462.8" width="2.2" height="82.5" fill="url(#gB)"/><rect x="626" y="544.8" width="2.2" height="1.7" fill="#0028f0"/><rect x="628" y="418.3" width="2.2" height="45.6" fill="url(#gA)"/><rect x="628" y="462.8" width="2.2" height="82.5" fill="url(#gB)"/><rect x="628" y="544.8" width="2.2" height="1.7" fill="#0028f0"/><rect x="630" y="418.3" width="2.2" height="45.6" fill="url(#gA)"/><rect x="630" y="462.8" width="2.2" height="82.5" fill="url(#gB)"/><rect x="630" y="544.8" width="2.2" height="1.7" fill="#0028f0"/><rect x="632" y="418.2" width="2.2" height="45.6" fill="url(#gA)"/><rect x="632" y="462.7" width="2.2" height="82.5" fill="url(#gB)"/><rect x="632" y="544.7" width="2.2" height="1.8" fill="#0028f0"/><rect x="634" y="418.2" width="2.2" height="45.6" fill="url(#gA)"/><rect x="634" y="462.7" width="2.2" height="82.5" fill="url(#gB)"/><rect x="634" y="544.7" width="2.2" height="1.8" fill="#0028f0"/><rect x="636" y="418.2" width="2.2" height="45.6" fill="url(#gA)"/><rect x="636" y="462.7" width="2.2" height="82.5" fill="url(#gB)"/><rect x="636" y="544.7" width="2.2" height="1.8" fill="#0028f0"/><rect x="638" y="418.1" width="2.2" height="45.6" fill="url(#gA)"/><rect x="638" y="462.6" width="2.2" height="82.5" fill="url(#gB)"/><rect x="638" y="544.6" width="2.2" height="1.9" fill="#0028f0"/><rect x="640" y="418.1" width="2.2" height="45.6" fill="url(#gA)"/><rect x="640" y="462.6" width="2.2" height="82.5" fill="url(#gB)"/><rect x="640" y="544.6" width="2.2" height="1.9" fill="#0028f0"/><rect x="642" y="418.1" width="2.2" height="45.6" fill="url(#gA)"/><rect x="642" y="462.6" width="2.2" height="82.5" fill="url(#gB)"/><rect x="642" y="544.6" width="2.2" height="1.9" fill="#0028f0"/><rect x="644" y="418" width="2.2" height="45.6" fill="url(#gA)"/><rect x="644" y="462.5" width="2.2" height="82.5" fill="url(#gB)"/><rect x="644" y="544.5" width="2.2" height="2" fill="#0028f0"/><rect x="646" y="418" width="2.2" height="45.6" fill="url(#gA)"/><rect x="646" y="462.5" width="2.2" height="82.5" fill="url(#gB)"/><rect x="646" y="544.5" width="2.2" height="2" fill="#0028f0"/><rect x="648" y="418" width="2.2" height="45.6" fill="url(#gA)"/><rect x="648" y="462.5" width="2.2" height="82.5" fill="url(#gB)"/><rect x="648" y="544.5" width="2.2" height="2" fill="#0028f0"/><rect x="650" y="417.9" width="2.2" height="45.6" fill="url(#gA)"/><rect x="650" y="462.4" width="2.2" height="82.5" fill="url(#gB)"/><rect x="650" y="544.4" width="2.2" height="2.1" fill="#0028f0"/><rect x="652" y="417.9" width="2.2" height="45.6" fill="url(#gA)"/><rect x="652" y="462.4" width="2.2" height="82.5" fill="url(#gB)"/><rect x="652" y="544.4" width="2.2" height="2.1" fill="#0028f0"/><rect x="654" y="417.8" width="2.2" height="45.6" fill="url(#gA)"/><rect x="654" y="462.3" width="2.2" height="82.5" fill="url(#gB)"/><rect x="654" y="544.3" width="2.2" height="2.2" fill="#0028f0"/><rect x="656" y="417.8" width="2.2" height="45.6" fill="url(#gA)"/><rect x="656" y="462.3" width="2.2" height="82.5" fill="url(#gB)"/><rect x="656" y="544.3" width="2.2" height="2.2" fill="#0028f0"/><rect x="658" y="417.7" width="2.2" height="45.6" fill="url(#gA)"/><rect x="658" y="462.2" width="2.2" height="82.5" fill="url(#gB)"/><rect x="658" y="544.2" width="2.2" height="2.3" fill="#0028f0"/><rect x="660" y="417.7" width="2.2" height="45.6" fill="url(#gA)"/><rect x="660" y="462.2" width="2.2" height="82.5" fill="url(#gB)"/><rect x="660" y="544.2" width="2.2" height="2.3" fill="#0028f0"/><rect x="662" y="417.6" width="2.2" height="45.6" fill="url(#gA)"/><rect x="662" y="462.1" width="2.2" height="82.5" fill="url(#gB)"/><rect x="662" y="544.1" width="2.2" height="2.4" fill="#0028f0"/><rect x="664" y="417.5" width="2.2" height="45.6" fill="url(#gA)"/><rect x="664" y="462" width="2.2" height="82.5" fill="url(#gB)"/><rect x="664" y="544" width="2.2" height="2.5" fill="#0028f0"/><rect x="666" y="417.5" width="2.2" height="45.6" fill="url(#gA)"/><rect x="666" y="462" width="2.2" height="82.5" fill="url(#gB)"/><rect x="666" y="544" width="2.2" height="2.5" fill="#0028f0"/><rect x="668" y="417.4" width="2.2" height="45.6" fill="url(#gA)"/><rect x="668" y="461.9" width="2.2" height="82.5" fill="url(#gB)"/><rect x="668" y="543.9" width="2.2" height="2.6" fill="#0028f0"/><rect x="670" y="417.4" width="2.2" height="45.6" fill="url(#gA)"/><rect x="670" y="461.9" width="2.2" height="82.5" fill="url(#gB)"/><rect x="670" y="543.9" width="2.2" height="2.6" fill="#0028f0"/><rect x="672" y="417.3" width="2.2" height="45.6" fill="url(#gA)"/><rect x="672" y="461.8" width="2.2" height="82.5" fill="url(#gB)"/><rect x="672" y="543.8" width="2.2" height="2.7" fill="#0028f0"/><rect x="674" y="417.2" width="2.2" height="45.6" fill="url(#gA)"/><rect x="674" y="461.7" width="2.2" height="82.5" fill="url(#gB)"/><rect x="674" y="543.7" width="2.2" height="2.8" fill="#0028f0"/><rect x="676" y="417.1" width="2.2" height="45.6" fill="url(#gA)"/><rect x="676" y="461.6" width="2.2" height="82.5" fill="url(#gB)"/><rect x="676" y="543.6" width="2.2" height="2.9" fill="#0028f0"/><rect x="678" y="417" width="2.2" height="45.6" fill="url(#gA)"/><rect x="678" y="461.5" width="2.2" height="82.5" fill="url(#gB)"/><rect x="678" y="543.5" width="2.2" height="3" fill="#0028f0"/><rect x="680" y="417" width="2.2" height="45.6" fill="url(#gA)"/><rect x="680" y="461.5" width="2.2" height="82.5" fill="url(#gB)"/><rect x="680" y="543.5" width="2.2" height="3" fill="#0028f0"/><rect x="682" y="416.9" width="2.2" height="45.6" fill="url(#gA)"/><rect x="682" y="461.4" width="2.2" height="82.5" fill="url(#gB)"/><rect x="682" y="543.4" width="2.2" height="3.1" fill="#0028f0"/><rect x="684" y="416.8" width="2.2" height="45.6" fill="url(#gA)"/><rect x="684" y="461.3" width="2.2" height="82.5" fill="url(#gB)"/><rect x="684" y="543.3" width="2.2" height="3.2" fill="#0028f0"/><rect x="686" y="416.7" width="2.2" height="45.6" fill="url(#gA)"/><rect x="686" y="461.2" width="2.2" height="82.5" fill="url(#gB)"/><rect x="686" y="543.2" width="2.2" height="3.3" fill="#0028f0"/><rect x="688" y="416.5" width="2.2" height="45.6" fill="url(#gA)"/><rect x="688" y="461" width="2.2" height="82.5" fill="url(#gB)"/><rect x="688" y="543" width="2.2" height="3.5" fill="#0028f0"/><rect x="690" y="416.4" width="2.2" height="45.6" fill="url(#gA)"/><rect x="690" y="460.9" width="2.2" height="82.5" fill="url(#gB)"/><rect x="690" y="542.9" width="2.2" height="3.6" fill="#0028f0"/><rect x="692" y="416.3" width="2.2" height="45.6" fill="url(#gA)"/><rect x="692" y="460.8" width="2.2" height="82.5" fill="url(#gB)"/><rect x="692" y="542.8" width="2.2" height="3.7" fill="#0028f0"/><rect x="694" y="416.2" width="2.2" height="45.6" fill="url(#gA)"/><rect x="694" y="460.7" width="2.2" height="82.5" fill="url(#gB)"/><rect x="694" y="542.7" width="2.2" height="3.8" fill="#0028f0"/><rect x="696" y="416" width="2.2" height="45.6" fill="url(#gA)"/><rect x="696" y="460.5" width="2.2" height="82.5" fill="url(#gB)"/><rect x="696" y="542.5" width="2.2" height="4" fill="#0028f0"/><rect x="698" y="415.9" width="2.2" height="45.6" fill="url(#gA)"/><rect x="698" y="460.4" width="2.2" height="82.5" fill="url(#gB)"/><rect x="698" y="542.4" width="2.2" height="4.1" fill="#0028f0"/><rect x="700" y="415.7" width="2.2" height="45.6" fill="url(#gA)"/><rect x="700" y="460.2" width="2.2" height="82.5" fill="url(#gB)"/><rect x="700" y="542.2" width="2.2" height="4.3" fill="#0028f0"/><rect x="702" y="415.5" width="2.2" height="45.6" fill="url(#gA)"/><rect x="702" y="460" width="2.2" height="82.5" fill="url(#gB)"/><rect x="702" y="542" width="2.2" height="4.5" fill="#0028f0"/><rect x="704" y="415.4" width="2.2" height="45.6" fill="url(#gA)"/><rect x="704" y="459.9" width="2.2" height="82.5" fill="url(#gB)"/><rect x="704" y="541.9" width="2.2" height="4.6" fill="#0028f0"/><rect x="706" y="415.2" width="2.2" height="45.6" fill="url(#gA)"/><rect x="706" y="459.7" width="2.2" height="82.5" fill="url(#gB)"/><rect x="706" y="541.7" width="2.2" height="4.8" fill="#0028f0"/><rect x="708" y="414.9" width="2.2" height="45.6" fill="url(#gA)"/><rect x="708" y="459.4" width="2.2" height="82.5" fill="url(#gB)"/><rect x="708" y="541.4" width="2.2" height="5.1" fill="#0028f0"/><rect x="710" y="414.7" width="2.2" height="45.6" fill="url(#gA)"/><rect x="710" y="459.2" width="2.2" height="82.5" fill="url(#gB)"/><rect x="710" y="541.2" width="2.2" height="5.3" fill="#0028f0"/><rect x="712" y="414.4" width="2.2" height="45.6" fill="url(#gA)"/><rect x="712" y="458.9" width="2.2" height="82.5" fill="url(#gB)"/><rect x="712" y="540.9" width="2.2" height="5.6" fill="#0028f0"/><rect x="714" y="414.2" width="2.2" height="45.6" fill="url(#gA)"/><rect x="714" y="458.7" width="2.2" height="82.5" fill="url(#gB)"/><rect x="714" y="540.7" width="2.2" height="5.8" fill="#0028f0"/><rect x="716" y="413.9" width="2.2" height="45.6" fill="url(#gA)"/><rect x="716" y="458.4" width="2.2" height="82.5" fill="url(#gB)"/><rect x="716" y="540.4" width="2.2" height="6.1" fill="#0028f0"/><rect x="718" y="413.5" width="2.2" height="45.6" fill="url(#gA)"/><rect x="718" y="458" width="2.2" height="82.5" fill="url(#gB)"/><rect x="718" y="540" width="2.2" height="6.5" fill="#0028f0"/><rect x="720" y="413.2" width="2.2" height="45.6" fill="url(#gA)"/><rect x="720" y="457.7" width="2.2" height="82.5" fill="url(#gB)"/><rect x="720" y="539.7" width="2.2" height="6.8" fill="#0028f0"/><rect x="722" y="412.8" width="2.2" height="45.6" fill="url(#gA)"/><rect x="722" y="457.3" width="2.2" height="82.5" fill="url(#gB)"/><rect x="722" y="539.3" width="2.2" height="7.2" fill="#0028f0"/><rect x="724" y="412.4" width="2.2" height="45.6" fill="url(#gA)"/><rect x="724" y="456.9" width="2.2" height="82.5" fill="url(#gB)"/><rect x="724" y="538.9" width="2.2" height="7.6" fill="#0028f0"/><rect x="726" y="411.9" width="2.2" height="45.6" fill="url(#gA)"/><rect x="726" y="456.4" width="2.2" height="82.5" fill="url(#gB)"/><rect x="726" y="538.4" width="2.2" height="8.1" fill="#0028f0"/><rect x="728" y="411.3" width="2.2" height="45.6" fill="url(#gA)"/><rect x="728" y="455.8" width="2.2" height="82.5" fill="url(#gB)"/><rect x="728" y="537.8" width="2.2" height="8.7" fill="#0028f0"/><rect x="730" y="410.8" width="2.2" height="45.6" fill="url(#gA)"/><rect x="730" y="455.3" width="2.2" height="82.5" fill="url(#gB)"/><rect x="730" y="537.3" width="2.2" height="9.2" fill="#0028f0"/><rect x="732" y="410.1" width="2.2" height="45.6" fill="url(#gA)"/><rect x="732" y="454.6" width="2.2" height="82.5" fill="url(#gB)"/><rect x="732" y="536.6" width="2.2" height="9.9" fill="#0028f0"/><rect x="734" y="409.3" width="2.2" height="45.6" fill="url(#gA)"/><rect x="734" y="453.8" width="2.2" height="82.5" fill="url(#gB)"/><rect x="734" y="535.8" width="2.2" height="10.7" fill="#0028f0"/><rect x="736" y="408.5" width="2.2" height="45.6" fill="url(#gA)"/><rect x="736" y="453" width="2.2" height="82.5" fill="url(#gB)"/><rect x="736" y="535" width="2.2" height="11.5" fill="#0028f0"/><rect x="738" y="407.6" width="2.2" height="45.6" fill="url(#gA)"/><rect x="738" y="452.1" width="2.2" height="82.5" fill="url(#gB)"/><rect x="738" y="534.1" width="2.2" height="12.4" fill="#0028f0"/><rect x="740" y="406.5" width="2.2" height="45.6" fill="url(#gA)"/><rect x="740" y="451" width="2.2" height="82.5" fill="url(#gB)"/><rect x="740" y="533" width="2.2" height="13.5" fill="#0028f0"/><rect x="742" y="405.2" width="2.2" height="45.6" fill="url(#gA)"/><rect x="742" y="449.7" width="2.2" height="82.5" fill="url(#gB)"/><rect x="742" y="531.7" width="2.2" height="14.8" fill="#0028f0"/><rect x="744" y="403.8" width="2.2" height="45.6" fill="url(#gA)"/><rect x="744" y="448.3" width="2.2" height="82.5" fill="url(#gB)"/><rect x="744" y="530.3" width="2.2" height="16.2" fill="#0028f0"/><rect x="746" y="402.1" width="2.2" height="45.6" fill="url(#gA)"/><rect x="746" y="446.6" width="2.2" height="82.5" fill="url(#gB)"/><rect x="746" y="528.6" width="2.2" height="17.9" fill="#0028f0"/><rect x="748" y="400.2" width="2.2" height="45.6" fill="url(#gA)"/><rect x="748" y="444.7" width="2.2" height="82.5" fill="url(#gB)"/><rect x="748" y="526.7" width="2.2" height="19.8" fill="#0028f0"/><rect x="750" y="397.9" width="2.2" height="45.6" fill="url(#gA)"/><rect x="750" y="442.4" width="2.2" height="82.5" fill="url(#gB)"/><rect x="750" y="524.4" width="2.2" height="22.1" fill="#0028f0"/><rect x="752" y="395.2" width="2.2" height="45.6" fill="url(#gA)"/><rect x="752" y="439.7" width="2.2" height="82.5" fill="url(#gB)"/><rect x="752" y="521.7" width="2.2" height="24.8" fill="#0028f0"/><rect x="754" y="392" width="2.2" height="45.6" fill="url(#gA)"/><rect x="754" y="436.5" width="2.2" height="82.5" fill="url(#gB)"/><rect x="754" y="518.5" width="2.2" height="28" fill="#0028f0"/><rect x="756" y="388.2" width="2.2" height="45.6" fill="url(#gA)"/><rect x="756" y="432.7" width="2.2" height="82.5" fill="url(#gB)"/><rect x="756" y="514.7" width="2.2" height="31.8" fill="#0028f0"/><rect x="758" y="383.7" width="2.2" height="45.6" fill="url(#gA)"/><rect x="758" y="428.2" width="2.2" height="82.5" fill="url(#gB)"/><rect x="758" y="510.2" width="2.2" height="36.3" fill="#0028f0"/><rect x="760" y="378.4" width="2.2" height="45.6" fill="url(#gA)"/><rect x="760" y="422.9" width="2.2" height="82.5" fill="url(#gB)"/><rect x="760" y="504.9" width="2.2" height="41.6" fill="#0028f0"/><rect x="762" y="372.3" width="2.2" height="45.6" fill="url(#gA)"/><rect x="762" y="416.8" width="2.2" height="82.5" fill="url(#gB)"/><rect x="762" y="498.8" width="2.2" height="47.7" fill="#0028f0"/><rect x="764" y="365.6" width="2.2" height="45.6" fill="url(#gA)"/><rect x="764" y="410.1" width="2.2" height="82.5" fill="url(#gB)"/><rect x="764" y="492.1" width="2.2" height="54.4" fill="#0028f0"/><rect x="766" y="362.6" width="2.2" height="45.6" fill="url(#gA)"/><rect x="766" y="407.1" width="2.2" height="82.5" fill="url(#gB)"/><rect x="766" y="489.1" width="2.2" height="57.4" fill="#0028f0"/><rect x="768" y="362.6" width="2.2" height="45.6" fill="url(#gA)"/><rect x="768" y="407.1" width="2.2" height="82.5" fill="url(#gB)"/><rect x="768" y="489.1" width="2.2" height="57.4" fill="#0028f0"/><rect x="770" y="362.6" width="2.2" height="45.6" fill="url(#gA)"/><rect x="770" y="407.1" width="2.2" height="82.5" fill="url(#gB)"/><rect x="770" y="489.1" width="2.2" height="57.4" fill="#0028f0"/><rect x="772" y="362.6" width="2.2" height="45.6" fill="url(#gA)"/><rect x="772" y="407.1" width="2.2" height="82.5" fill="url(#gB)"/><rect x="772" y="489.1" width="2.2" height="57.4" fill="#0028f0"/><rect x="774" y="369" width="2.2" height="45.6" fill="url(#gA)"/><rect x="774" y="413.5" width="2.2" height="82.5" fill="url(#gB)"/><rect x="774" y="495.5" width="2.2" height="51" fill="#0028f0"/><rect x="776" y="375.4" width="2.2" height="45.6" fill="url(#gA)"/><rect x="776" y="419.9" width="2.2" height="82.5" fill="url(#gB)"/><rect x="776" y="501.9" width="2.2" height="44.6" fill="#0028f0"/><rect x="778" y="381.2" width="2.2" height="45.6" fill="url(#gA)"/><rect x="778" y="425.7" width="2.2" height="82.5" fill="url(#gB)"/><rect x="778" y="507.7" width="2.2" height="38.8" fill="#0028f0"/><rect x="780" y="386.1" width="2.2" height="45.6" fill="url(#gA)"/><rect x="780" y="430.6" width="2.2" height="82.5" fill="url(#gB)"/><rect x="780" y="512.6" width="2.2" height="33.9" fill="#0028f0"/><rect x="782" y="390.2" width="2.2" height="45.6" fill="url(#gA)"/><rect x="782" y="434.7" width="2.2" height="82.5" fill="url(#gB)"/><rect x="782" y="516.7" width="2.2" height="29.8" fill="#0028f0"/><rect x="784" y="393.7" width="2.2" height="45.6" fill="url(#gA)"/><rect x="784" y="438.2" width="2.2" height="82.5" fill="url(#gB)"/><rect x="784" y="520.2" width="2.2" height="26.3" fill="#0028f0"/><rect x="786" y="396.6" width="2.2" height="45.6" fill="url(#gA)"/><rect x="786" y="441.1" width="2.2" height="82.5" fill="url(#gB)"/><rect x="786" y="523.1" width="2.2" height="23.4" fill="#0028f0"/><rect x="788" y="399.1" width="2.2" height="45.6" fill="url(#gA)"/><rect x="788" y="443.6" width="2.2" height="82.5" fill="url(#gB)"/><rect x="788" y="525.6" width="2.2" height="20.9" fill="#0028f0"/><rect x="790" y="401.2" width="2.2" height="45.6" fill="url(#gA)"/><rect x="790" y="445.7" width="2.2" height="82.5" fill="url(#gB)"/><rect x="790" y="527.7" width="2.2" height="18.8" fill="#0028f0"/><rect x="792" y="403" width="2.2" height="45.6" fill="url(#gA)"/><rect x="792" y="447.5" width="2.2" height="82.5" fill="url(#gB)"/><rect x="792" y="529.5" width="2.2" height="17" fill="#0028f0"/><rect x="794" y="404.5" width="2.2" height="45.6" fill="url(#gA)"/><rect x="794" y="449" width="2.2" height="82.5" fill="url(#gB)"/><rect x="794" y="531" width="2.2" height="15.5" fill="#0028f0"/><rect x="796" y="405.9" width="2.2" height="45.6" fill="url(#gA)"/><rect x="796" y="450.4" width="2.2" height="82.5" fill="url(#gB)"/><rect x="796" y="532.4" width="2.2" height="14.1" fill="#0028f0"/><rect x="798" y="407" width="2.2" height="45.6" fill="url(#gA)"/><rect x="798" y="451.5" width="2.2" height="82.5" fill="url(#gB)"/><rect x="798" y="533.5" width="2.2" height="13" fill="#0028f0"/><rect x="800" y="408" width="2.2" height="45.6" fill="url(#gA)"/><rect x="800" y="452.5" width="2.2" height="82.5" fill="url(#gB)"/><rect x="800" y="534.5" width="2.2" height="12" fill="#0028f0"/><rect x="802" y="408.9" width="2.2" height="45.6" fill="url(#gA)"/><rect x="802" y="453.4" width="2.2" height="82.5" fill="url(#gB)"/><rect x="802" y="535.4" width="2.2" height="11.1" fill="#0028f0"/><rect x="804" y="409.7" width="2.2" height="45.6" fill="url(#gA)"/><rect x="804" y="454.2" width="2.2" height="82.5" fill="url(#gB)"/><rect x="804" y="536.2" width="2.2" height="10.3" fill="#0028f0"/><rect x="806" y="410.4" width="2.2" height="45.6" fill="url(#gA)"/><rect x="806" y="454.9" width="2.2" height="82.5" fill="url(#gB)"/><rect x="806" y="536.9" width="2.2" height="9.6" fill="#0028f0"/><rect x="808" y="411.1" width="2.2" height="45.6" fill="url(#gA)"/><rect x="808" y="455.6" width="2.2" height="82.5" fill="url(#gB)"/><rect x="808" y="537.6" width="2.2" height="8.9" fill="#0028f0"/><rect x="810" y="411.6" width="2.2" height="45.6" fill="url(#gA)"/><rect x="810" y="456.1" width="2.2" height="82.5" fill="url(#gB)"/><rect x="810" y="538.1" width="2.2" height="8.4" fill="#0028f0"/><rect x="812" y="412.1" width="2.2" height="45.6" fill="url(#gA)"/><rect x="812" y="456.6" width="2.2" height="82.5" fill="url(#gB)"/><rect x="812" y="538.6" width="2.2" height="7.9" fill="#0028f0"/><rect x="814" y="412.6" width="2.2" height="45.6" fill="url(#gA)"/><rect x="814" y="457.1" width="2.2" height="82.5" fill="url(#gB)"/><rect x="814" y="539.1" width="2.2" height="7.4" fill="#0028f0"/><rect x="816" y="413" width="2.2" height="45.6" fill="url(#gA)"/><rect x="816" y="457.5" width="2.2" height="82.5" fill="url(#gB)"/><rect x="816" y="539.5" width="2.2" height="7" fill="#0028f0"/><rect x="818" y="413.4" width="2.2" height="45.6" fill="url(#gA)"/><rect x="818" y="457.9" width="2.2" height="82.5" fill="url(#gB)"/><rect x="818" y="539.9" width="2.2" height="6.6" fill="#0028f0"/><rect x="820" y="413.7" width="2.2" height="45.6" fill="url(#gA)"/><rect x="820" y="458.2" width="2.2" height="82.5" fill="url(#gB)"/><rect x="820" y="540.2" width="2.2" height="6.3" fill="#0028f0"/><rect x="822" y="414" width="2.2" height="45.6" fill="url(#gA)"/><rect x="822" y="458.5" width="2.2" height="82.5" fill="url(#gB)"/><rect x="822" y="540.5" width="2.2" height="6" fill="#0028f0"/><rect x="824" y="414.3" width="2.2" height="45.6" fill="url(#gA)"/><rect x="824" y="458.8" width="2.2" height="82.5" fill="url(#gB)"/><rect x="824" y="540.8" width="2.2" height="5.7" fill="#0028f0"/><rect x="826" y="414.6" width="2.2" height="45.6" fill="url(#gA)"/><rect x="826" y="459.1" width="2.2" height="82.5" fill="url(#gB)"/><rect x="826" y="541.1" width="2.2" height="5.4" fill="#0028f0"/><rect x="828" y="414.8" width="2.2" height="45.6" fill="url(#gA)"/><rect x="828" y="459.3" width="2.2" height="82.5" fill="url(#gB)"/><rect x="828" y="541.3" width="2.2" height="5.2" fill="#0028f0"/><rect x="830" y="415" width="2.2" height="45.6" fill="url(#gA)"/><rect x="830" y="459.5" width="2.2" height="82.5" fill="url(#gB)"/><rect x="830" y="541.5" width="2.2" height="5" fill="#0028f0"/><rect x="832" y="415.3" width="2.2" height="45.6" fill="url(#gA)"/><rect x="832" y="459.8" width="2.2" height="82.5" fill="url(#gB)"/><rect x="832" y="541.8" width="2.2" height="4.7" fill="#0028f0"/><rect x="834" y="415.4" width="2.2" height="45.6" fill="url(#gA)"/><rect x="834" y="459.9" width="2.2" height="82.5" fill="url(#gB)"/><rect x="834" y="541.9" width="2.2" height="4.6" fill="#0028f0"/><rect x="836" y="415.6" width="2.2" height="45.6" fill="url(#gA)"/><rect x="836" y="460.1" width="2.2" height="82.5" fill="url(#gB)"/><rect x="836" y="542.1" width="2.2" height="4.4" fill="#0028f0"/><rect x="838" y="415.8" width="2.2" height="45.6" fill="url(#gA)"/><rect x="838" y="460.3" width="2.2" height="82.5" fill="url(#gB)"/><rect x="838" y="542.3" width="2.2" height="4.2" fill="#0028f0"/><rect x="840" y="416" width="2.2" height="45.6" fill="url(#gA)"/><rect x="840" y="460.5" width="2.2" height="82.5" fill="url(#gB)"/><rect x="840" y="542.5" width="2.2" height="4" fill="#0028f0"/><rect x="842" y="416.1" width="2.2" height="45.6" fill="url(#gA)"/><rect x="842" y="460.6" width="2.2" height="82.5" fill="url(#gB)"/><rect x="842" y="542.6" width="2.2" height="3.9" fill="#0028f0"/><rect x="844" y="416.2" width="2.2" height="45.6" fill="url(#gA)"/><rect x="844" y="460.7" width="2.2" height="82.5" fill="url(#gB)"/><rect x="844" y="542.7" width="2.2" height="3.8" fill="#0028f0"/><rect x="846" y="416.4" width="2.2" height="45.6" fill="url(#gA)"/><rect x="846" y="460.9" width="2.2" height="82.5" fill="url(#gB)"/><rect x="846" y="542.9" width="2.2" height="3.6" fill="#0028f0"/><rect x="848" y="416.5" width="2.2" height="45.6" fill="url(#gA)"/><rect x="848" y="461" width="2.2" height="82.5" fill="url(#gB)"/><rect x="848" y="543" width="2.2" height="3.5" fill="#0028f0"/><rect x="850" y="416.6" width="2.2" height="45.6" fill="url(#gA)"/><rect x="850" y="461.1" width="2.2" height="82.5" fill="url(#gB)"/><rect x="850" y="543.1" width="2.2" height="3.4" fill="#0028f0"/><rect x="852" y="416.7" width="2.2" height="45.6" fill="url(#gA)"/><rect x="852" y="461.2" width="2.2" height="82.5" fill="url(#gB)"/><rect x="852" y="543.2" width="2.2" height="3.3" fill="#0028f0"/><rect x="854" y="416.8" width="2.2" height="45.6" fill="url(#gA)"/><rect x="854" y="461.3" width="2.2" height="82.5" fill="url(#gB)"/><rect x="854" y="543.3" width="2.2" height="3.2" fill="#0028f0"/><rect x="856" y="416.9" width="2.2" height="45.6" fill="url(#gA)"/><rect x="856" y="461.4" width="2.2" height="82.5" fill="url(#gB)"/><rect x="856" y="543.4" width="2.2" height="3.1" fill="#0028f0"/><rect x="858" y="417" width="2.2" height="45.6" fill="url(#gA)"/><rect x="858" y="461.5" width="2.2" height="82.5" fill="url(#gB)"/><rect x="858" y="543.5" width="2.2" height="3" fill="#0028f0"/><rect x="860" y="417.1" width="2.2" height="45.6" fill="url(#gA)"/><rect x="860" y="461.6" width="2.2" height="82.5" fill="url(#gB)"/><rect x="860" y="543.6" width="2.2" height="2.9" fill="#0028f0"/><rect x="862" y="417.2" width="2.2" height="45.6" fill="url(#gA)"/><rect x="862" y="461.7" width="2.2" height="82.5" fill="url(#gB)"/><rect x="862" y="543.7" width="2.2" height="2.8" fill="#0028f0"/><rect x="864" y="417.2" width="2.2" height="45.6" fill="url(#gA)"/><rect x="864" y="461.7" width="2.2" height="82.5" fill="url(#gB)"/><rect x="864" y="543.7" width="2.2" height="2.8" fill="#0028f0"/><rect x="866" y="417.3" width="2.2" height="45.6" fill="url(#gA)"/><rect x="866" y="461.8" width="2.2" height="82.5" fill="url(#gB)"/><rect x="866" y="543.8" width="2.2" height="2.7" fill="#0028f0"/><rect x="868" y="417.4" width="2.2" height="45.6" fill="url(#gA)"/><rect x="868" y="461.9" width="2.2" height="82.5" fill="url(#gB)"/><rect x="868" y="543.9" width="2.2" height="2.6" fill="#0028f0"/><rect x="870" y="417.5" width="2.2" height="45.6" fill="url(#gA)"/><rect x="870" y="462" width="2.2" height="82.5" fill="url(#gB)"/><rect x="870" y="544" width="2.2" height="2.5" fill="#0028f0"/><rect x="872" y="417.5" width="2.2" height="45.6" fill="url(#gA)"/><rect x="872" y="462" width="2.2" height="82.5" fill="url(#gB)"/><rect x="872" y="544" width="2.2" height="2.5" fill="#0028f0"/><rect x="874" y="417.6" width="2.2" height="45.6" fill="url(#gA)"/><rect x="874" y="462.1" width="2.2" height="82.5" fill="url(#gB)"/><rect x="874" y="544.1" width="2.2" height="2.4" fill="#0028f0"/><rect x="876" y="417.6" width="2.2" height="45.6" fill="url(#gA)"/><rect x="876" y="462.1" width="2.2" height="82.5" fill="url(#gB)"/><rect x="876" y="544.1" width="2.2" height="2.4" fill="#0028f0"/><rect x="878" y="417.7" width="2.2" height="45.6" fill="url(#gA)"/><rect x="878" y="462.2" width="2.2" height="82.5" fill="url(#gB)"/><rect x="878" y="544.2" width="2.2" height="2.3" fill="#0028f0"/><rect x="880" y="417.7" width="2.2" height="45.6" fill="url(#gA)"/><rect x="880" y="462.2" width="2.2" height="82.5" fill="url(#gB)"/><rect x="880" y="544.2" width="2.2" height="2.3" fill="#0028f0"/><rect x="882" y="417.8" width="2.2" height="45.6" fill="url(#gA)"/><rect x="882" y="462.3" width="2.2" height="82.5" fill="url(#gB)"/><rect x="882" y="544.3" width="2.2" height="2.2" fill="#0028f0"/><rect x="884" y="417.8" width="2.2" height="45.6" fill="url(#gA)"/><rect x="884" y="462.3" width="2.2" height="82.5" fill="url(#gB)"/><rect x="884" y="544.3" width="2.2" height="2.2" fill="#0028f0"/><rect x="886" y="417.9" width="2.2" height="45.6" fill="url(#gA)"/><rect x="886" y="462.4" width="2.2" height="82.5" fill="url(#gB)"/><rect x="886" y="544.4" width="2.2" height="2.1" fill="#0028f0"/><rect x="888" y="417.9" width="2.2" height="45.6" fill="url(#gA)"/><rect x="888" y="462.4" width="2.2" height="82.5" fill="url(#gB)"/><rect x="888" y="544.4" width="2.2" height="2.1" fill="#0028f0"/><rect x="890" y="418" width="2.2" height="45.6" fill="url(#gA)"/><rect x="890" y="462.5" width="2.2" height="82.5" fill="url(#gB)"/><rect x="890" y="544.5" width="2.2" height="2" fill="#0028f0"/><rect x="892" y="418" width="2.2" height="45.6" fill="url(#gA)"/><rect x="892" y="462.5" width="2.2" height="82.5" fill="url(#gB)"/><rect x="892" y="544.5" width="2.2" height="2" fill="#0028f0"/><rect x="894" y="418.1" width="2.2" height="45.6" fill="url(#gA)"/><rect x="894" y="462.6" width="2.2" height="82.5" fill="url(#gB)"/><rect x="894" y="544.6" width="2.2" height="1.9" fill="#0028f0"/><rect x="896" y="418.1" width="2.2" height="45.6" fill="url(#gA)"/><rect x="896" y="462.6" width="2.2" height="82.5" fill="url(#gB)"/><rect x="896" y="544.6" width="2.2" height="1.9" fill="#0028f0"/><rect x="898" y="418.1" width="2.2" height="45.6" fill="url(#gA)"/><rect x="898" y="462.6" width="2.2" height="82.5" fill="url(#gB)"/><rect x="898" y="544.6" width="2.2" height="1.9" fill="#0028f0"/><rect x="900" y="418.2" width="2.2" height="45.6" fill="url(#gA)"/><rect x="900" y="462.7" width="2.2" height="82.5" fill="url(#gB)"/><rect x="900" y="544.7" width="2.2" height="1.8" fill="#0028f0"/><rect x="902" y="418.2" width="2.2" height="45.6" fill="url(#gA)"/><rect x="902" y="462.7" width="2.2" height="82.5" fill="url(#gB)"/><rect x="902" y="544.7" width="2.2" height="1.8" fill="#0028f0"/><rect x="904" y="418.2" width="2.2" height="45.6" fill="url(#gA)"/><rect x="904" y="462.7" width="2.2" height="82.5" fill="url(#gB)"/><rect x="904" y="544.7" width="2.2" height="1.8" fill="#0028f0"/><rect x="906" y="418.3" width="2.2" height="45.6" fill="url(#gA)"/><rect x="906" y="462.8" width="2.2" height="82.5" fill="url(#gB)"/><rect x="906" y="544.8" width="2.2" height="1.7" fill="#0028f0"/><rect x="908" y="418.3" width="2.2" height="45.6" fill="url(#gA)"/><rect x="908" y="462.8" width="2.2" height="82.5" fill="url(#gB)"/><rect x="908" y="544.8" width="2.2" height="1.7" fill="#0028f0"/><rect x="910" y="418.3" width="2.2" height="45.6" fill="url(#gA)"/><rect x="910" y="462.8" width="2.2" height="82.5" fill="url(#gB)"/><rect x="910" y="544.8" width="2.2" height="1.7" fill="#0028f0"/><rect x="912" y="418.3" width="2.2" height="45.6" fill="url(#gA)"/><rect x="912" y="462.8" width="2.2" height="82.5" fill="url(#gB)"/><rect x="912" y="544.8" width="2.2" height="1.7" fill="#0028f0"/><rect x="914" y="418.4" width="2.2" height="45.6" fill="url(#gA)"/><rect x="914" y="462.9" width="2.2" height="82.5" fill="url(#gB)"/><rect x="914" y="544.9" width="2.2" height="1.6" fill="#0028f0"/><rect x="916" y="418.4" width="2.2" height="45.6" fill="url(#gA)"/><rect x="916" y="462.9" width="2.2" height="82.5" fill="url(#gB)"/><rect x="916" y="544.9" width="2.2" height="1.6" fill="#0028f0"/><rect x="918" y="418.4" width="2.2" height="45.6" fill="url(#gA)"/><rect x="918" y="462.9" width="2.2" height="82.5" fill="url(#gB)"/><rect x="918" y="544.9" width="2.2" height="1.6" fill="#0028f0"/><rect x="920" y="418.4" width="2.2" height="45.6" fill="url(#gA)"/><rect x="920" y="462.9" width="2.2" height="82.5" fill="url(#gB)"/><rect x="920" y="544.9" width="2.2" height="1.6" fill="#0028f0"/><rect x="922" y="418.5" width="2.2" height="45.6" fill="url(#gA)"/><rect x="922" y="463" width="2.2" height="82.5" fill="url(#gB)"/><rect x="922" y="545" width="2.2" height="1.5" fill="#0028f0"/><rect x="924" y="418.5" width="2.2" height="45.6" fill="url(#gA)"/><rect x="924" y="463" width="2.2" height="82.5" fill="url(#gB)"/><rect x="924" y="545" width="2.2" height="1.5" fill="#0028f0"/><rect x="926" y="418.5" width="2.2" height="45.6" fill="url(#gA)"/><rect x="926" y="463" width="2.2" height="82.5" fill="url(#gB)"/><rect x="926" y="545" width="2.2" height="1.5" fill="#0028f0"/><rect x="928" y="418.5" width="2.2" height="45.6" fill="url(#gA)"/><rect x="928" y="463" width="2.2" height="82.5" fill="url(#gB)"/><rect x="928" y="545" width="2.2" height="1.5" fill="#0028f0"/><rect x="930" y="418.6" width="2.2" height="45.6" fill="url(#gA)"/><rect x="930" y="463.1" width="2.2" height="82.5" fill="url(#gB)"/><rect x="930" y="545.1" width="2.2" height="1.4" fill="#0028f0"/><rect x="932" y="418.6" width="2.2" height="45.6" fill="url(#gA)"/><rect x="932" y="463.1" width="2.2" height="82.5" fill="url(#gB)"/><rect x="932" y="545.1" width="2.2" height="1.4" fill="#0028f0"/><rect x="934" y="418.6" width="2.2" height="45.6" fill="url(#gA)"/><rect x="934" y="463.1" width="2.2" height="82.5" fill="url(#gB)"/><rect x="934" y="545.1" width="2.2" height="1.4" fill="#0028f0"/><rect x="936" y="418.6" width="2.2" height="45.6" fill="url(#gA)"/><rect x="936" y="463.1" width="2.2" height="82.5" fill="url(#gB)"/><rect x="936" y="545.1" width="2.2" height="1.4" fill="#0028f0"/><rect x="938" y="418.6" width="2.2" height="45.6" fill="url(#gA)"/><rect x="938" y="463.1" width="2.2" height="82.5" fill="url(#gB)"/><rect x="938" y="545.1" width="2.2" height="1.4" fill="#0028f0"/><rect x="940" y="418.6" width="2.2" height="45.6" fill="url(#gA)"/><rect x="940" y="463.1" width="2.2" height="82.5" fill="url(#gB)"/><rect x="940" y="545.1" width="2.2" height="1.4" fill="#0028f0"/><rect x="942" y="418.7" width="2.2" height="45.6" fill="url(#gA)"/><rect x="942" y="463.2" width="2.2" height="82.5" fill="url(#gB)"/><rect x="942" y="545.2" width="2.2" height="1.3" fill="#0028f0"/><rect x="944" y="418.7" width="2.2" height="45.6" fill="url(#gA)"/><rect x="944" y="463.2" width="2.2" height="82.5" fill="url(#gB)"/><rect x="944" y="545.2" width="2.2" height="1.3" fill="#0028f0"/><rect x="946" y="418.7" width="2.2" height="45.6" fill="url(#gA)"/><rect x="946" y="463.2" width="2.2" height="82.5" fill="url(#gB)"/><rect x="946" y="545.2" width="2.2" height="1.3" fill="#0028f0"/><rect x="948" y="418.7" width="2.2" height="45.6" fill="url(#gA)"/><rect x="948" y="463.2" width="2.2" height="82.5" fill="url(#gB)"/><rect x="950" y="418.7" width="2.2" height="45.6" fill="url(#gA)"/><rect x="950" y="463.2" width="2.2" height="82.5" fill="url(#gB)"/><rect x="952" y="418.7" width="2.2" height="45.6" fill="url(#gA)"/><rect x="952" y="463.2" width="2.2" height="82.5" fill="url(#gB)"/><rect x="954" y="418.8" width="2.2" height="45.6" fill="url(#gA)"/><rect x="954" y="463.3" width="2.2" height="82.5" fill="url(#gB)"/><rect x="956" y="418.8" width="2.2" height="45.6" fill="url(#gA)"/><rect x="956" y="463.3" width="2.2" height="82.5" fill="url(#gB)"/><rect x="958" y="418.8" width="2.2" height="45.6" fill="url(#gA)"/><rect x="958" y="463.3" width="2.2" height="82.5" fill="url(#gB)"/><rect x="960" y="418.8" width="2.2" height="45.6" fill="url(#gA)"/><rect x="960" y="463.3" width="2.2" height="82.5" fill="url(#gB)"/><rect x="962" y="418.8" width="2.2" height="45.6" fill="url(#gA)"/><rect x="962" y="463.3" width="2.2" height="82.5" fill="url(#gB)"/><rect x="964" y="418.8" width="2.2" height="45.6" fill="url(#gA)"/><rect x="964" y="463.3" width="2.2" height="82.5" fill="url(#gB)"/><rect x="966" y="418.8" width="2.2" height="45.6" fill="url(#gA)"/><rect x="966" y="463.3" width="2.2" height="82.5" fill="url(#gB)"/><rect x="968" y="418.9" width="2.2" height="45.6" fill="url(#gA)"/><rect x="968" y="463.4" width="2.2" height="82.5" fill="url(#gB)"/><rect x="970" y="418.9" width="2.2" height="45.6" fill="url(#gA)"/><rect x="970" y="463.4" width="2.2" height="82.5" fill="url(#gB)"/><rect x="972" y="418.9" width="2.2" height="45.6" fill="url(#gA)"/><rect x="972" y="463.4" width="2.2" height="82.5" fill="url(#gB)"/><rect x="974" y="418.9" width="2.2" height="45.6" fill="url(#gA)"/><rect x="974" y="463.4" width="2.2" height="82.5" fill="url(#gB)"/><rect x="976" y="418.9" width="2.2" height="45.6" fill="url(#gA)"/><rect x="976" y="463.4" width="2.2" height="82.5" fill="url(#gB)"/><rect x="978" y="418.9" width="2.2" height="45.6" fill="url(#gA)"/><rect x="978" y="463.4" width="2.2" height="82.5" fill="url(#gB)"/><rect x="980" y="418.9" width="2.2" height="45.6" fill="url(#gA)"/><rect x="980" y="463.4" width="2.2" height="82.5" fill="url(#gB)"/><rect x="982" y="418.9" width="2.2" height="45.6" fill="url(#gA)"/><rect x="982" y="463.4" width="2.2" height="82.5" fill="url(#gB)"/><rect x="984" y="418.9" width="2.2" height="45.6" fill="url(#gA)"/><rect x="984" y="463.4" width="2.2" height="82.5" fill="url(#gB)"/><rect x="986" y="418.9" width="2.2" height="45.6" fill="url(#gA)"/><rect x="986" y="463.4" width="2.2" height="82.5" fill="url(#gB)"/><rect x="988" y="419" width="2.2" height="45.6" fill="url(#gA)"/><rect x="988" y="463.5" width="2.2" height="82.5" fill="url(#gB)"/><rect x="990" y="419" width="2.2" height="45.6" fill="url(#gA)"/><rect x="990" y="463.5" width="2.2" height="82.5" fill="url(#gB)"/><rect x="992" y="419" width="2.2" height="45.6" fill="url(#gA)"/><rect x="992" y="463.5" width="2.2" height="82.5" fill="url(#gB)"/><rect x="994" y="419" width="2.2" height="45.6" fill="url(#gA)"/><rect x="994" y="463.5" width="2.2" height="82.5" fill="url(#gB)"/><rect x="996" y="419" width="2.2" height="45.6" fill="url(#gA)"/><rect x="996" y="463.5" width="2.2" height="82.5" fill="url(#gB)"/><rect x="998" y="419" width="2.2" height="45.6" fill="url(#gA)"/><rect x="998" y="463.5" width="2.2" height="82.5" fill="url(#gB)"/><rect x="1000" y="419" width="2.2" height="45.6" fill="url(#gA)"/><rect x="1000" y="463.5" width="2.2" height="82.5" fill="url(#gB)"/><rect x="1002" y="419" width="2.2" height="45.6" fill="url(#gA)"/><rect x="1002" y="463.5" width="2.2" height="82.5" fill="url(#gB)"/><rect x="1004" y="419" width="2.2" height="45.6" fill="url(#gA)"/><rect x="1004" y="463.5" width="2.2" height="82.5" fill="url(#gB)"/><rect x="1006" y="419" width="2.2" height="45.6" fill="url(#gA)"/><rect x="1006" y="463.5" width="2.2" height="82.5" fill="url(#gB)"/><rect x="1008" y="419" width="2.2" height="45.6" fill="url(#gA)"/><rect x="1008" y="463.5" width="2.2" height="82.5" fill="url(#gB)"/></g><path d="M768 450 L766.5 480 L763.5 515 L760.5 546 L778.5 546 L775.5 515 L772.5 480 L771 450 Z" fill="#0a44ff" opacity=".5" filter="url(#bl2)"/><path d="M768.5 384 L768.3 425 L768.6 450 L769.3 476 L769.7 476 L770.4 450 L770.7 425 L770.5 384 Z" fill="#20e8d8" opacity=".8" filter="url(#bl0)"/><path d="M361 430V442.8M363 430.3V441.8M365 424.6V440.8M367 430.3V443.5M369 430.9V444.4M371 430.1V441.4M373 429.5V441.9M375 430.8V440.6M377 428.3V441.6M379 428.2V441.2M381 426.7V441.1M383 426.4V445M385 429.9V440.7M387 426.1V447M389 431.1V446.7M391 430.6V449.4M393 428V443.3M395 431.4V441.9M397 427.5V441.1M399 429.1V441.6M401 430.1V442M403 431.4V441.9M405 431.3V442.2M407 429.9V443.1M409 428.6V441.1M411 427.8V442.1M413 421.8V442.9M415 431.6V443.9M417 431.1V440.9M419 428.3V445.2M421 430.5V441.5M423 425.3V445.7M425 427V443M427 427.6V440.9M429 430.5V443.4M431 427.5V443.3M433 425.1V441.6M435 427.7V444.8M437 430.2V442.5M439 427.9V440.7M441 427.9V442.3M443 423.6V442.4M445 429.3V440.9M447 430.9V441M449 426.6V443.7M451 431.3V440.6M453 423.1V445.5M455 427.2V443.5M457 430.7V441.4M459 427.2V444.2M461 431.6V440.9M463 425.5V442.5M465 427.7V445.8M467 430.6V440.6M469 429.1V445.6M471 426.9V442.4M473 429.6V442.9M475 431.6V440.7M477 426.5V440.9M479 431.5V441.7M481 423.6V443.1M483 431V443.4M485 429.8V445.1M487 426V442.4M489 431.7V446.1M491 431.3V440.9M493 430.3V443.9M495 425.4V440.4M497 426.8V442M499 421.3V441.3M501 426.8V441.9M503 430.6V442.6M505 430.5V444.7M507 428.4V440.5M509 429.6V448.6M511 427V443.8M513 424.8V442.5M515 430.9V443.2M517 429.3V444.2M519 421.8V447M521 430.1V443.8M523 428.1V441.3M525 428.1V442M527 431.2V441.5M529 425.3V443.1M531 428.6V446.9M533 422.9V441.1M535 429V441.6M537 429.4V441M539 429.5V442.3M541 431V443.2M543 422V441.6M545 431.4V442.7M547 428.1V441.3M549 431.1V444.4M551 429.8V440.4M553 430V441.9M555 429.7V442M557 427.9V441.8M559 427.9V441.1M561 429V440.3M563 427.7V442.3M565 428.4V440.5M567 430.3V441.2M569 420.6V443.4M571 426.5V440.6M573 430V441.6M575 431.2V441.4M577 426.4V440.5M579 423.7V441.8M581 426.5V446.5M583 428.1V442.5M585 430.9V444.4M587 428.6V442.1M589 430.3V449M591 429.4V448.9M593 426V442.6M595 423.9V441M597 422V440.2M599 425.3V442.8M601 428.6V442.2M603 428.8V440M605 422.6V443.1M607 428.3V440.9M609 430.1V445.1M611 425.3V443.7M613 426V449.5M615 428.9V442.3M617 426.5V443M619 425.4V440.2M621 428V441.1M623 428.2V442.3M625 430.1V440.7M627 430.6V441.5M629 427.5V440.1M631 420.8V439.7M633 430.4V441.9M635 429.1V439.8M637 427.4V444.3M639 428.5V440.4M641 430.3V445.4M643 428.3V440.2M645 423.7V440.5M647 427.8V439.9M649 429.1V442.1M651 419.4V440.7M653 425V440.4M655 428V441.1M657 429V439.4M659 429.4V439.9M661 428.7V439.6M663 427.1V443.6M665 429.5V443.1M667 429.8V440.3M669 429.2V440.4M671 418.7V440.6M673 425.3V443.4M675 428.5V443.7M677 427V439.1M679 424.7V438.9M681 426.7V441.1M683 425.3V439.6M685 428.9V440.8M687 423V441M689 426.1V439.5M691 429V440.4M693 426.8V440.1M695 428.9V438.4M697 424.6V438.6M699 428.1V439.4M701 427V437.5M703 422.5V443.1M705 425V438M707 426.2V437.4M709 423.1V437.6M711 421.8V436.5M713 425.7V438.3M715 424.3V436.5M717 424.9V441.8M719 423.8V436.6M721 423.7V436.4M723 420.5V435.6M725 425.2V436.9M727 424V434.7M729 422.9V435.7M731 422.8V433.6M733 419.1V432.5M735 417.5V435.9M737 415.3V431.8M739 417.3V431.6M741 418.8V435M743 417.6V429.7M745 415.9V426.9M747 414.8V428.5M749 411.7V423.9M751 406.5V425M753 401.7V422.5M755 402.6V425.8M757 402.1V415M759 395.1V409.8M761 392V404M763 387V399.7M765 371.1V394.8M767 369.1V386.9M873 380.2V402.5M875 394.2V406.9M877 399.4V413.9M879 404.4V419.3M881 408.8V424.3M883 414.9V430.9M885 417.5V431.3M887 419.8V430M889 419.4V434.4M891 423.3V434.5M893 424.2V436M895 422.9V438.3M897 423.5V438.6M899 424.3V440M901 421.1V437.3M903 428.3V438.3M905 428V438.9M907 425.3V438.8M909 428.8V441.6M911 426.2V438.6M913 424.3V441.8M915 427.3V439.7M917 420.5V439M919 426.6V440.5M921 422.1V439.3M923 428.8V441.7M925 424.2V440.2M927 430.1V440.8M929 428V441.9M931 430.1V443.5M933 429.9V439.9M935 429.2V443M937 429.3V441.5M939 428.7V440.5M941 419.2V441.7M943 430.3V441M945 430V441.2M947 430.6V441.6M949 425V443.2M951 426.4V440.4M953 431.2V443.6M955 423.9V442.7M957 430.7V443M959 427.6V440.5M961 426V445.7M963 430.7V443.8M965 421.5V442.4M967 425.3V441.2M969 424.5V441.2M971 430.3V442.8M973 427.8V444M975 430.2V441M977 430.1V445.8M979 430.8V440.7M981 428.2V440.7M983 423V440.8M985 430.8V442.5M987 428.2V441.4M989 431V446.1M991 429.5V445.8M993 429.3V441M995 431.4V446.8M997 425.6V441.6M999 431.2V444.6M1001 422.3V441.5M1003 430.9V441.3M1005 425.7V444.5M1007 431.1V444.2M1009 431.5V442.8M1011 424.6V446.3M1013 424.5V441.5M1015 422.3V441.7M1017 431.4V445.4M1019 431.6V444.5M1021 426.4V442.6M1023 429.4V442.8M1025 429.9V442.2M1027 427.7V442.1M1029 424V442.6M1031 431.3V442.8M1033 430.1V441.2M1035 425.3V442.7M1037 432V440.9M1039 430.8V441.5M1041 424.7V448.4M1043 428V441.8M1045 425.8V443.5M1047 427.1V441.1M1049 430.8V441.9M1051 428.6V441.5M1053 431.2V444.9M1055 430V445.1M1057 431.7V445.5M1059 421.2V441.3M1061 430.5V443.3M1063 425.2V442.8M1065 423.1V441.7M1067 431.5V441.5M1069 432V443.2M1071 430.4V448.3M1073 427.5V440.8M1075 427.8V441.7M1077 432V449.2M1079 422V444.9M1081 429V445.9M1083 430V441M1085 428.7V442.4M1087 429.4V443.8M1089 430.4V442.4M1091 430.7V441.7M1093 427.4V442.6M1095 423.9V442.3M1097 423.6V442M1099 429.5V449.6M1101 427.9V442.7M1103 424.1V443.4M1105 427V441.6M1107 429V443.4M1109 431.1V442.8M1111 426.9V441.1M1113 430.2V448.9M1115 431.1V442.8M1117 430.4V444.6M1119 430.6V441.4M1121 428.1V448.1M1123 431.6V442.4M1125 431.7V448.8M1127 429.7V445.4M1129 429.4V444.4M1131 429.5V444.7M1133 429.6V441.1M1135 428.9V442.3M1137 429.7V445.2M1139 429.8V445.1M1141 427V442.3M1143 430.8V446.2M1145 425.1V441.3M1147 431V441.4M1149 425.8V445.9M1151 431.5V442.2M1153 428V446.8M1155 429.1V445.1M1157 426.8V440.9M1159 426.3V440.8M1161 430.6V441.8M1163 431.4V444.6M1165 431.9V441.8M1167 430.1V442.6M1169 430.2V442.7M1171 431.4V442.3M1173 430.5V446.5M1175 426.1V441.8M1177 430.2V441.6M1179 428.7V441M1181 430.9V442.8M1183 428.7V441.6M1185 431.3V443.2M1187 420.2V441.3M1189 429.7V442.7M1191 429V441M1193 427.2V442.8M1195 428.4V444.5M1197 424.3V442.5M1199 431V443.6M1201 430.7V441.3M1203 431.2V444.6M1205 423.9V444.7M1207 430.5V446.6M1209 429.7V443.8M1211 426.9V444.8M1213 431V441.7" stroke="#fff" stroke-width="2" fill="none"/><path d="M769.5 384 V168" stroke="#fff" stroke-width="2.4" fill="none"/><path d="M770.1 168 L772 257" stroke="#f4f4f4" stroke-width="1.6" fill="none"/><path d="M772 257 L772.5 241.7 L773 234.7 L773.5 229.4 L774 225 L774.5 221.5 L775 218.7 L775.5 216.7 L776 215.4 L776.5 215 L777 215.4 L777.5 216.8 L778 219.2 L778.5 222.7 L779 227.4 L779.5 233.6 L780 241.6 L780.5 252.6 L781 277 L781 277 L781.5 262.5 L782 255.9 L782.5 250.7 L783 246.4 L783.5 242.7 L784 239.4 L784.5 236.5 L785 234 L785.5 231.7 L786 229.8 L786.5 228.2 L787 226.9 L787.5 225.9 L788 225.2 L788.5 224.7 L789 224.6 L789.6 224.7 L790.1 225.2 L790.6 225.9 L791.1 227 L791.6 228.4 L792.1 230.1 L792.6 232.1 L793.1 234.5 L793.6 237.2 L794.1 240.4 L794.6 244.1 L795.1 248.3 L795.6 253.1 L796.1 259 L796.6 266.6 L797.1 283 L797.1 283 L797.6 267.7 L798.1 260.6 L798.6 255.1 L799.1 250.5 L799.6 246.5 L800.1 243 L800.6 239.9 L801.1 237.2 L801.7 234.8 L802.2 232.7 L802.7 230.9 L803.2 229.4 L803.7 228.2 L804.2 227.2 L804.7 226.5 L805.2 226.1 L805.7 226 L806.2 226.1 L806.7 226.5 L807.2 227.2 L807.7 228.2 L808.2 229.4 L808.7 230.9 L809.2 232.7 L809.7 234.8 L810.3 237.3 L810.8 240.1 L811.3 243.2 L811.8 246.8 L812.3 250.8 L812.8 255.5 L813.3 261.1 L813.8 268.3 L814.3 284 L814.3 284 L814.8 267.3 L815.3 259.6 L815.8 253.6 L816.3 248.7 L816.8 244.4 L817.3 240.7 L817.8 237.5 L818.3 234.6 L818.8 232.2 L819.3 230.2 L819.8 228.4 L820.3 227 L820.8 226 L821.3 225.2 L821.8 224.8 L822.3 224.6 L822.8 224.7 L823.3 225.2 L823.8 225.9 L824.3 227 L824.8 228.3 L825.3 229.9 L825.8 231.9 L826.3 234.1 L826.8 236.7 L827.3 239.7 L827.8 243 L828.3 246.8 L828.8 251.2 L829.3 256.5 L829.8 263.2 L830.3 278 L830.3 278 L830.8 259.7 L831.3 251.2 L831.8 244.8 L832.3 239.5 L832.8 235 L833.3 231.3 L833.8 228.1 L834.3 225.5 L834.8 223.4 L835.3 221.7 L835.8 220.6 L836.3 219.9 L836.8 219.7 L837.3 219.9 L837.8 220.6 L838.3 221.7 L838.8 223.3 L839.3 225.3 L839.8 227.7 L840.3 230.7 L840.8 234.2 L841.3 238.3 L841.8 243.1 L842.3 248.9 L842.8 256.5 L843.3 273 L843.3 273 L843.8 250.7 L844.3 240.6 L844.8 233 L845.3 227.1 L845.8 222.4 L846.3 218.7 L846.8 216.1 L847.3 214.4 L847.8 213.5 L848.3 213.5 L848.8 214.3 L849.3 216 L849.8 218.5 L850.3 221.9 L850.8 226.1 L851.3 231.4 L851.8 238 L852.3 246.7 L852.8 266 L852.8 266 L853.3 239.1 L853.8 227.3 L854.3 219.1 L854.8 213.3 L855.3 209.6 L855.8 207.8 L856.3 207.8 L856.8 209.6 L857.3 213 L857.8 218.3 L858.3 225.6 L858.8 235.9 L859.3 259 L859.3 259 L859.8 228.1 L860.3 215.4 L860.8 208 L861.3 204.4 L861.8 204.4 L862.3 207.7 L862.8 214.4 L863.3 224.9 L863.8 250" stroke="#fff" stroke-width="1.7" fill="none" stroke-linejoin="round"/><path d="M863.8 250 L864.6 205 L865.4 246 L866.2 198 L866.9 240 L867.5 190 L868.1 232 L868.7 182 L869.2 222 L869.7 172 L870 170 L870 300 L867 262 L864.5 256 Z" fill="#fff" stroke="#fff" stroke-width="1"/><path d="M870.3 169 V386" stroke="#fff" stroke-width="2.2" fill="none"/></g><path d="M360 118 L1213 118 L1213 353.4 L880.3 353.4 L854.9 160.8 L480.8 160.8 L455.2 353.4 L360 353.4 Z" fill="rgba(255,62,62,.435)"/><path d="M1213 353.4 L880.3 353.4 L854.9 160.8 L480.8 160.8 L455.2 353.4 L360 353.4" fill="none" stroke="#c4403e" stroke-width="1.2" opacity=".85"/><path d="M359.5 118V547" stroke="#b9b9b9" stroke-width="1.6"/><path d="M360 117.5H1213" stroke="#d9b0b0" stroke-width="1"/><path d="M1213.5 118V546" stroke="#9fd0e8" stroke-width="1"/><path d="M359 546H1214" stroke="#5fd2f4" stroke-width="2.2"/><path d="M870 143 L878.5 155.5 L870 168 L861.5 155.5 Z" fill="#fff" stroke="#111" stroke-width="1.3"/><path d="M867.9 153.3 L870.5 151 V160.2" stroke="#111" stroke-width="1.35" fill="none"/></svg>
</div>
<div class="ct" style="top:80.5px;left:365.5px;font-size:17.7px;">Ref -30.000 dBm</div>
<div class="ct" style="top:99.8px;left:365.5px;font-size:17.1px;">Div 10.0</div>
<div class="ct" style="top:80.5px;left:587.5px;width:400px;text-align:center;font-size:17.6px;">RBW 2.465820 kHz</div>
<div class="ct" style="top:99.8px;left:587px;width:400px;text-align:center;font-size:17.05px;">Atten Auto</div>
<div class="ct" style="top:80.5px;right:327.29999999999995px;font-size:17.4px;">VBW 2.465820 kHz</div>
<div class="ct" style="top:99.8px;right:327.29999999999995px;font-size:17.5px;">100% POI 1.229 ms</div>
<div class="ct" style="top:119.5px;right:327.5px;font-size:17.4px;">Mkr 1: 1.001192 GHz, -41.972 dBm</div>
<div class="ct" style="top:193.1px;right:1177.5px;font-size:14.6px;">-50.00</div>
<div class="ct" style="top:278.7px;right:1177.5px;font-size:14.6px;">-70.00</div>
<div class="ct" style="top:364.29999999999995px;right:1177.5px;font-size:14.6px;">-90.00</div>
<div class="ct" style="top:449.9px;right:1177.5px;font-size:14.6px;">-110.00</div>
<div class="ct" style="top:535.5px;right:1177.5px;font-size:14.6px;">-130.00</div>
<div class="ct" style="top:551px;left:365.5px;font-size:17.27px;">Start 998.199511 MHz</div>
<div class="ct" style="top:551px;left:587px;width:400px;text-align:center;font-size:17.32px;">Center 1.000700 GHz</div>
<div class="ct" style="top:571px;left:587px;width:400px;text-align:center;font-size:17.16px;">Span 5.000000 MHz</div>
<div class="ct" style="top:551px;right:327.29999999999995px;font-size:17.4px;">Stop 1.003200 GHz</div>
<div class="ct" style="top:571px;right:327.29999999999995px;font-size:17.5px;">4096 pts in 131 ms</div>
<div id="fmt"></div>
<div class="hdr1" style="left:306px;top:594.7px;width:924px;height:16px;line-height:16px">Frequency Mask Trigger</div>
<div class="lbl " style="left:328.5px;top:622px;">Enabled</div>
<div class="chk" style="left:425.5px;top:621px"><svg width="11" height="11" viewBox="0 0 11 11"><path d="M1.4 5.9 L4 8.3 L9.2 2" stroke="#222" stroke-width="1.7" fill="none"/></svg></div>
<div class="lbl " style="left:328.5px;top:645px;">Trigger Type</div>
<div class="inp cmb " style="left:425.5px;top:640.5px;width:190px;height:20.5px">Frequency Mask</div>
<div class="lbl " style="left:328.5px;top:668px;">Level</div>
<div class="spn u" style="left:425.3px;top:663.5px"></div><div class="spn d" style="left:448.2px;top:663.5px"></div>
<div class="inp " style="left:471px;top:663.5px;width:90px;height:20.5px">-80.000</div>
<div class="inp cmb " style="left:563px;top:663.5px;width:52.5px;height:20.5px">dBm</div>
<div class="btn" style="left:325px;top:695.5px;width:291px;height:20.5px;">Import Mask</div>
<div class="btn" style="left:325px;top:718.5px;width:291px;height:20.5px;">Save Mask</div>
<div class="btn" style="left:928.5px;top:617.5px;width:291px;height:20.5px;">Add Row</div>
<div class="btn" style="left:928.5px;top:640.5px;width:291px;height:20.5px;">Delete Selected Rows</div>
<div class="abs" style="left:635px;top:617px;width:275px;height:137px;background:#fff;border:1px solid #828790"></div>
<div class="abs" style="left:636px;top:618px;width:273px;height:22px;background:linear-gradient(180deg,#fafafa,#e9e9eb);border-bottom:1px solid #b4b7bd"></div>
<div class="abs" style="left:636px;top:618px;width:13px;height:135px;background:#f0f0f0;border-right:1px solid #b4b7bd"></div>
<div class="abs" style="left:762px;top:618px;width:1px;height:114px;background:#c9ccd2"></div>
<div class="lbl" style="left:650px;top:622px;width:110px;text-align:right;font-size:10.8px">Frequency (MHz)</div>
<div class="lbl" style="left:764px;top:622px;width:143px;text-align:right;font-size:10.8px;font-weight:bold">Amplitude (dBm)</div>
<div class="abs" style="left:636px;top:657.8px;width:273px;height:1px;background:#d4d6da"></div>
<div class="lbl" style="left:639px;top:643.8px;font-size:10.3px;">0</div>
<div class="lbl" style="left:650px;top:641.3px;width:109.3px;text-align:right;font-size:10.1px">998.75</div>
<div class="lbl" style="left:764px;top:641.3px;width:141.3px;text-align:right;font-size:10.1px">-85</div>
<div class="abs" style="left:636px;top:676.0999999999999px;width:273px;height:1px;background:#d4d6da"></div>
<div class="lbl" style="left:639px;top:662.0999999999999px;font-size:10.3px;">1</div>
<div class="lbl" style="left:650px;top:659.5999999999999px;width:109.3px;text-align:right;font-size:10.1px">998.9</div>
<div class="lbl" style="left:764px;top:659.5999999999999px;width:141.3px;text-align:right;font-size:10.1px">-40</div>
<div class="abs" style="left:636px;top:694.4px;width:273px;height:1px;background:#d4d6da"></div>
<div class="lbl" style="left:639px;top:680.4px;font-size:10.3px;">2</div>
<div class="lbl" style="left:650px;top:677.9px;width:109.3px;text-align:right;font-size:10.1px">999</div>
<div class="lbl" style="left:764px;top:677.9px;width:141.3px;text-align:right;font-size:10.1px">-40</div>
<div class="abs" style="left:636px;top:712.6999999999999px;width:273px;height:1px;background:#d4d6da"></div>
<div class="lbl" style="left:639px;top:698.6999999999999px;font-size:10.3px;">3</div>
<div class="lbl" style="left:650px;top:696.1999999999999px;width:109.3px;text-align:right;font-size:10.1px">1001.1</div>
<div class="lbl" style="left:764px;top:696.1999999999999px;width:141.3px;text-align:right;font-size:10.1px">-40</div>
<div class="abs" style="left:763px;top:713.0px;width:146px;height:18px;background:#ebebeb"></div>
<div class="abs" style="left:636px;top:731.0px;width:273px;height:1px;background:#d4d6da"></div>
<div class="lbl" style="left:639px;top:717.0px;font-size:10.3px;font-weight:bold;">4</div>
<div class="lbl" style="left:650px;top:714.5px;width:109.3px;text-align:right;font-size:10.1px">1001.25</div>
<div class="lbl" style="left:764px;top:714.5px;width:141.3px;text-align:right;font-size:10.1px">-85</div>
<div id="tabs"></div>
<div class="btn" style="left:307px;top:779.5px;width:98.5px;height:21.5px;font-size:11.5px;line-height:19px">Record</div>
<div class="btn" style="left:407.5px;top:779.5px;width:98.5px;height:21.5px;font-size:11.5px;line-height:19px">Mask Trigger</div>
<div id="status"></div>
<div class="lbl" style="left:1216.5px;top:808px;color:#e4e8f0;font-size:11px;white-space:pre">BB60C   43.25 C  --  4.75 V  s/n - 52100219</div>
<div class="lbl" style="left:1441.5px;top:808px;color:#e4e8f0;font-size:11px">Firmware 7</div>
<svg class="abs" style="left:1520px;top:812px" width="10" height="10" viewBox="0 0 10 10"><g fill="#c8d0e0"><rect x="7" y="1" width="2" height="2"/><rect x="4" y="4" width="2" height="2"/><rect x="7" y="4" width="2" height="2"/><rect x="1" y="7" width="2" height="2"/><rect x="4" y="7" width="2" height="2"/><rect x="7" y="7" width="2" height="2"/></g></svg>
</body>
</html>
